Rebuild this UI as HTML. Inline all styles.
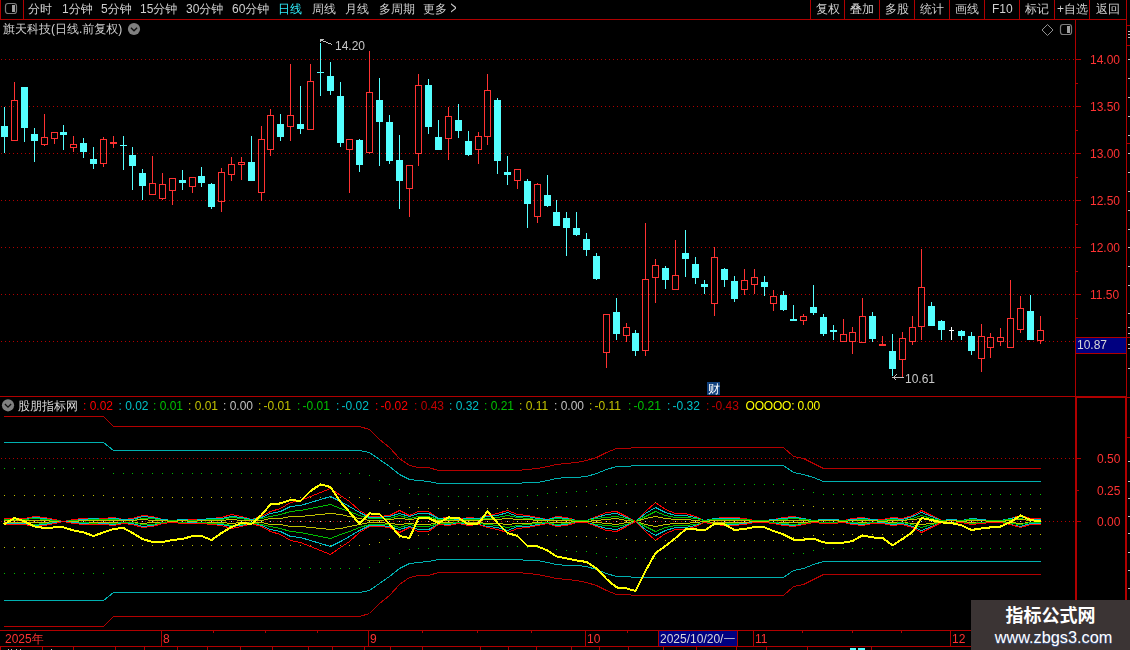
<!DOCTYPE html>
<html lang="zh-CN"><head><meta charset="utf-8"><title>旗天科技 日线</title>
<style>
html,body{margin:0;padding:0;background:#000;}
body{width:1130px;height:650px;position:relative;overflow:hidden;font-family:"Liberation Sans","WenQuanYi Zen Hei","Noto Sans CJK SC",sans-serif;}
.t{position:absolute;white-space:nowrap;line-height:14px;height:14px;}
.wm{position:absolute;left:971px;top:600px;width:159px;height:50px;background:#3b3434;color:#fff;text-align:center;}
.wm .a{position:absolute;left:0;right:0;top:4px;font-size:18px;line-height:24px;font-weight:bold;font-family:"Liberation Sans","Noto Sans CJK SC",sans-serif;}
.wm .b{position:absolute;left:6px;right:0;top:26.5px;font-size:16.3px;line-height:20px;font-family:"Liberation Sans","DejaVu Sans",sans-serif;text-shadow:0 1px 1px #4060a0;}
</style></head><body>
<svg width="1130" height="650" viewBox="0 0 1130 650" shape-rendering="crispEdges" style="position:absolute;left:0;top:0"><line x1="0" y1="59.5" x2="1075" y2="59.5" stroke="#b00000" stroke-width="1" stroke-dasharray="1 3" stroke-dashoffset="-1"/><rect x="1076" y="59" width="5" height="1" fill="#b00000"/><rect x="1076" y="83" width="2" height="1" fill="#b00000"/><line x1="0" y1="106.5" x2="1075" y2="106.5" stroke="#b00000" stroke-width="1" stroke-dasharray="1 3" stroke-dashoffset="-1"/><rect x="1076" y="106" width="5" height="1" fill="#b00000"/><rect x="1076" y="130" width="2" height="1" fill="#b00000"/><line x1="0" y1="153.5" x2="1075" y2="153.5" stroke="#b00000" stroke-width="1" stroke-dasharray="1 3" stroke-dashoffset="-1"/><rect x="1076" y="153" width="5" height="1" fill="#b00000"/><rect x="1076" y="177" width="2" height="1" fill="#b00000"/><line x1="0" y1="200.5" x2="1075" y2="200.5" stroke="#b00000" stroke-width="1" stroke-dasharray="1 3" stroke-dashoffset="-1"/><rect x="1076" y="200" width="5" height="1" fill="#b00000"/><rect x="1076" y="224" width="2" height="1" fill="#b00000"/><line x1="0" y1="247.5" x2="1075" y2="247.5" stroke="#b00000" stroke-width="1" stroke-dasharray="1 3" stroke-dashoffset="-1"/><rect x="1076" y="247" width="5" height="1" fill="#b00000"/><rect x="1076" y="271" width="2" height="1" fill="#b00000"/><line x1="0" y1="294.5" x2="1075" y2="294.5" stroke="#b00000" stroke-width="1" stroke-dasharray="1 3" stroke-dashoffset="-1"/><rect x="1076" y="294" width="5" height="1" fill="#b00000"/><rect x="1076" y="318" width="2" height="1" fill="#b00000"/><line x1="0" y1="341.5" x2="1075" y2="341.5" stroke="#b00000" stroke-width="1" stroke-dasharray="1 3" stroke-dashoffset="-1"/><rect x="1076" y="341" width="5" height="1" fill="#b00000"/><line x1="0" y1="458.5" x2="1075" y2="458.5" stroke="#b00000" stroke-width="1" stroke-dasharray="1 3" stroke-dashoffset="-1"/><rect x="1076" y="458" width="5" height="1" fill="#b00000"/><line x1="0" y1="521.5" x2="1075" y2="521.5" stroke="#b00000" stroke-width="1" stroke-dasharray="1 3" stroke-dashoffset="-1"/><rect x="1076" y="521" width="5" height="1" fill="#b00000"/><rect x="1077" y="490" width="2" height="1" fill="#b00000"/><rect x="0" y="19" width="1127" height="1" fill="#b00000"/><rect x="0" y="0" width="1" height="20" fill="#b00000"/><rect x="0" y="646" width="1" height="4" fill="#b00000"/><rect x="8" y="649" width="1" height="1" fill="#c0c0c0"/><rect x="11" y="649" width="1" height="1" fill="#c0c0c0"/><rect x="16" y="649" width="1" height="1" fill="#c0c0c0"/><rect x="20" y="649" width="1" height="1" fill="#c0c0c0"/><rect x="51" y="649" width="1" height="1" fill="#c0c0c0"/><rect x="850" y="648" width="6" height="2" fill="#54ffff"/><rect x="858" y="648" width="7" height="2" fill="#54ffff"/><rect x="23" y="0" width="1" height="20" fill="#b00000"/><rect x="810" y="0" width="1" height="20" fill="#b00000"/><rect x="844" y="0" width="1" height="20" fill="#b00000"/><rect x="879" y="0" width="1" height="20" fill="#b00000"/><rect x="914" y="0" width="1" height="20" fill="#b00000"/><rect x="949" y="0" width="1" height="20" fill="#b00000"/><rect x="984" y="0" width="1" height="20" fill="#b00000"/><rect x="1019" y="0" width="1" height="20" fill="#b00000"/><rect x="1054" y="0" width="1" height="20" fill="#b00000"/><rect x="1089" y="0" width="1" height="20" fill="#b00000"/><rect x="1126" y="0" width="1" height="650" fill="#b00000"/><rect x="1075" y="19" width="1" height="627" fill="#b00000"/><rect x="0" y="396" width="1127" height="1" fill="#b00000"/><rect x="1076" y="397" width="54" height="1" fill="#b00000"/><rect x="1076" y="397" width="1" height="250" fill="#b00000"/><rect x="1125" y="397" width="1" height="250" fill="#b00000"/><rect x="0" y="630" width="1076" height="1" fill="#b00000"/><rect x="0" y="646" width="1127" height="1" fill="#b00000"/><rect x="161" y="630" width="1" height="16" fill="#b00000"/><rect x="368" y="630" width="1" height="16" fill="#b00000"/><rect x="585" y="630" width="1" height="16" fill="#b00000"/><rect x="753" y="630" width="1" height="16" fill="#b00000"/><rect x="950" y="630" width="1" height="16" fill="#b00000"/><rect x="213" y="630" width="1" height="3" fill="#b00000"/><rect x="265" y="630" width="1" height="3" fill="#b00000"/><rect x="317" y="630" width="1" height="3" fill="#b00000"/><rect x="422" y="630" width="1" height="3" fill="#b00000"/><rect x="477" y="630" width="1" height="3" fill="#b00000"/><rect x="531" y="630" width="1" height="3" fill="#b00000"/><rect x="627" y="630" width="1" height="3" fill="#b00000"/><rect x="669" y="630" width="1" height="3" fill="#b00000"/><rect x="711" y="630" width="1" height="3" fill="#b00000"/><rect x="802" y="630" width="1" height="3" fill="#b00000"/><rect x="852" y="630" width="1" height="3" fill="#b00000"/><rect x="901" y="630" width="1" height="3" fill="#b00000"/><rect x="1000" y="630" width="1" height="3" fill="#b00000"/><rect x="1050" y="630" width="1" height="3" fill="#b00000"/><rect x="42" y="647" width="1" height="3" fill="#b00000"/><rect x="73" y="647" width="1" height="3" fill="#b00000"/><rect x="115" y="647" width="1" height="3" fill="#b00000"/><rect x="144" y="647" width="1" height="3" fill="#b00000"/><rect x="177" y="647" width="1" height="3" fill="#b00000"/><rect x="207" y="647" width="1" height="3" fill="#b00000"/><rect x="240" y="647" width="1" height="3" fill="#b00000"/><rect x="272" y="647" width="1" height="3" fill="#b00000"/><rect x="308" y="647" width="1" height="3" fill="#b00000"/><rect x="332" y="647" width="1" height="3" fill="#b00000"/><rect x="364" y="647" width="1" height="3" fill="#b00000"/><rect x="390" y="647" width="1" height="3" fill="#b00000"/><rect x="422" y="647" width="1" height="3" fill="#b00000"/><rect x="480" y="647" width="1" height="3" fill="#b00000"/><rect x="508" y="647" width="1" height="3" fill="#b00000"/><rect x="536" y="647" width="1" height="3" fill="#b00000"/><rect x="571" y="647" width="1" height="3" fill="#b00000"/><rect x="599" y="647" width="1" height="3" fill="#b00000"/><rect x="628" y="647" width="1" height="3" fill="#b00000"/><rect x="663" y="647" width="1" height="3" fill="#b00000"/><rect x="696" y="647" width="1" height="3" fill="#b00000"/><rect x="736" y="647" width="1" height="3" fill="#b00000"/><rect x="766" y="647" width="1" height="3" fill="#b00000"/><rect x="807" y="647" width="1" height="3" fill="#b00000"/><rect x="871" y="647" width="1" height="3" fill="#b00000"/><rect x="1127" y="25" width="3" height="1" fill="#b00000"/><rect x="1127" y="45" width="3" height="1" fill="#b00000"/><rect x="1127" y="337" width="3" height="1" fill="#b00000"/><rect x="1128" y="59" width="2" height="1" fill="#c0c0c0"/><rect x="1128" y="78" width="2" height="1" fill="#c0c0c0"/><rect x="1128" y="97" width="2" height="1" fill="#c0c0c0"/><rect x="1128" y="116" width="2" height="1" fill="#c0c0c0"/><rect x="1128" y="135" width="2" height="1" fill="#c0c0c0"/><rect x="1128" y="153" width="2" height="1" fill="#c0c0c0"/><rect x="1128" y="172" width="2" height="1" fill="#c0c0c0"/><rect x="1128" y="191" width="2" height="1" fill="#c0c0c0"/><rect x="1128" y="210" width="2" height="1" fill="#c0c0c0"/><rect x="1128" y="229" width="2" height="1" fill="#c0c0c0"/><rect x="1128" y="247" width="2" height="1" fill="#c0c0c0"/><rect x="1128" y="266" width="2" height="1" fill="#c0c0c0"/><rect x="1128" y="285" width="2" height="1" fill="#c0c0c0"/><rect x="1128" y="313" width="2" height="1" fill="#c0c0c0"/><rect x="1128" y="327" width="2" height="1" fill="#c0c0c0"/><rect x="1128" y="333" width="2" height="1" fill="#c0c0c0"/><rect x="1128" y="344" width="2" height="1" fill="#c0c0c0"/><rect x="1128" y="348" width="2" height="1" fill="#c0c0c0"/><rect x="1128" y="368" width="2" height="1" fill="#c0c0c0"/><rect x="1128" y="461" width="2" height="1" fill="#c0c0c0"/><rect x="1128" y="481" width="2" height="1" fill="#c0c0c0"/><rect x="1128" y="498" width="2" height="1" fill="#c0c0c0"/><rect x="1128" y="516" width="2" height="1" fill="#c0c0c0"/><rect x="1128" y="533" width="2" height="1" fill="#c0c0c0"/><rect x="1128" y="552" width="2" height="1" fill="#c0c0c0"/><rect x="1128" y="570" width="2" height="1" fill="#c0c0c0"/><rect x="1128" y="588" width="2" height="1" fill="#c0c0c0"/><rect x="1128" y="31" width="2" height="1" fill="#c0c0c0"/><rect x="1128" y="34" width="2" height="1" fill="#c0c0c0"/><rect x="1128" y="37" width="2" height="1" fill="#c0c0c0"/><rect x="1127" y="437" width="3" height="1" fill="#b00000"/><rect x="1127" y="143" width="3" height="1" fill="#b00000"/><polyline points="4.5,518.5 14.5,518.5 24.5,518.5 34.5,516.5 44.5,517.5 54.5,519.5 63.5,521.5 73.5,519.5 83.5,518.5 93.5,518.5 103.5,518.5 113.5,517.5 123.5,519.5 132.5,518.5 142.5,515.5 152.5,516.5 162.5,519.5 172.5,520.5 182.5,519.5 192.5,519.5 201.5,519.5 211.5,518.5 221.5,517.5 231.5,514.5 241.5,516.5 251.5,519.5 261.5,516.5 270.5,511.5 280.5,508.5 290.5,502.5 300.5,500.5 310.5,496.5 320.5,492.5 330.5,488.5 340.5,495.5 349.5,501.5 359.5,510.5 369.5,516.5 379.5,516.5 389.5,515.5 399.5,510.5 409.5,515.5 418.5,511.5 428.5,511.5 438.5,518.5 448.5,517.5 458.5,519.5 468.5,517.5 478.5,518.5 487.5,515.5 497.5,513.5 507.5,510.5 517.5,514.5 527.5,515.5 537.5,517.5 547.5,519.5 556.5,516.5 566.5,517.5 576.5,520.5 586.5,520.5 596.5,516.5 606.5,512.5 616.5,511.5 626.5,516.5 635.5,521.5 645.5,511.5 655.5,502.5 665.5,509.5 675.5,513.5 685.5,513.5 695.5,516.5 704.5,520.5 714.5,518.5 724.5,517.5 734.5,517.5 744.5,518.5 754.5,520.5 764.5,520.5 773.5,519.5 783.5,517.5 793.5,516.5 803.5,518.5 813.5,520.5 823.5,519.5 833.5,519.5 843.5,520.5 852.5,518.5 862.5,517.5 872.5,519.5 882.5,519.5 892.5,517.5 902.5,518.5 912.5,515.5 921.5,510.5 931.5,515.5 941.5,520.5 951.5,519.5 961.5,520.5 971.5,518.5 981.5,519.5 990.5,520.5 1000.5,520.5 1010.5,518.5 1020.5,515.5 1030.5,518.5 1040.5,518.5" fill="none" stroke="#ff0000" stroke-width="1" stroke-linecap="square" /><polyline points="4.5,519.5 14.5,519.5 24.5,519.5 34.5,517.5 44.5,518.5 54.5,520.5 63.5,521.5 73.5,520.5 83.5,519.5 93.5,518.5 103.5,519.5 113.5,518.5 123.5,519.5 132.5,519.5 142.5,516.5 152.5,517.5 162.5,519.5 172.5,520.5 182.5,519.5 192.5,520.5 201.5,519.5 211.5,518.5 221.5,518.5 231.5,516.5 241.5,517.5 251.5,519.5 261.5,517.5 270.5,513.5 280.5,511.5 290.5,506.5 300.5,505.5 310.5,502.5 320.5,499.5 330.5,496.5 340.5,501.5 349.5,506.5 359.5,512.5 369.5,517.5 379.5,517.5 389.5,516.5 399.5,513.5 409.5,516.5 418.5,513.5 428.5,513.5 438.5,518.5 448.5,518.5 458.5,519.5 468.5,518.5 478.5,518.5 487.5,516.5 497.5,515.5 507.5,512.5 517.5,516.5 527.5,516.5 537.5,518.5 547.5,519.5 556.5,517.5 566.5,518.5 576.5,520.5 586.5,520.5 596.5,517.5 606.5,514.5 616.5,513.5 626.5,517.5 635.5,521.5 645.5,513.5 655.5,507.5 665.5,512.5 675.5,515.5 685.5,515.5 695.5,517.5 704.5,520.5 714.5,518.5 724.5,518.5 734.5,518.5 744.5,519.5 754.5,520.5 764.5,520.5 773.5,519.5 783.5,518.5 793.5,517.5 803.5,518.5 813.5,520.5 823.5,519.5 833.5,519.5 843.5,520.5 852.5,519.5 862.5,518.5 872.5,519.5 882.5,520.5 892.5,518.5 902.5,519.5 912.5,516.5 921.5,512.5 931.5,516.5 941.5,520.5 951.5,519.5 961.5,520.5 971.5,518.5 981.5,519.5 990.5,520.5 1000.5,520.5 1010.5,518.5 1020.5,516.5 1030.5,519.5 1040.5,519.5" fill="none" stroke="#00c0c8" stroke-width="1" stroke-linecap="square" /><polyline points="4.5,519.5 14.5,519.5 24.5,519.5 34.5,518.5 44.5,519.5 54.5,520.5 63.5,521.5 73.5,520.5 83.5,520.5 93.5,519.5 103.5,519.5 113.5,519.5 123.5,520.5 132.5,520.5 142.5,518.5 152.5,518.5 162.5,520.5 172.5,520.5 182.5,520.5 192.5,520.5 201.5,520.5 211.5,519.5 221.5,519.5 231.5,517.5 241.5,518.5 251.5,520.5 261.5,518.5 270.5,516.5 280.5,514.5 290.5,511.5 300.5,510.5 310.5,508.5 320.5,506.5 330.5,504.5 340.5,508.5 349.5,511.5 359.5,515.5 369.5,518.5 379.5,518.5 389.5,518.5 399.5,515.5 409.5,518.5 418.5,516.5 428.5,516.5 438.5,519.5 448.5,519.5 458.5,520.5 468.5,519.5 478.5,519.5 487.5,518.5 497.5,517.5 507.5,515.5 517.5,517.5 527.5,518.5 537.5,519.5 547.5,520.5 556.5,518.5 566.5,519.5 576.5,520.5 586.5,520.5 596.5,518.5 606.5,517.5 616.5,516.5 626.5,518.5 635.5,521.5 645.5,516.5 655.5,511.5 665.5,515.5 675.5,517.5 685.5,517.5 695.5,518.5 704.5,520.5 714.5,519.5 724.5,519.5 734.5,519.5 744.5,519.5 754.5,520.5 764.5,520.5 773.5,520.5 783.5,519.5 793.5,518.5 803.5,519.5 813.5,520.5 823.5,520.5 833.5,520.5 843.5,520.5 852.5,520.5 862.5,519.5 872.5,520.5 882.5,520.5 892.5,519.5 902.5,520.5 912.5,518.5 921.5,515.5 931.5,518.5 941.5,520.5 951.5,520.5 961.5,520.5 971.5,519.5 981.5,520.5 990.5,520.5 1000.5,520.5 1010.5,519.5 1020.5,518.5 1030.5,520.5 1040.5,520.5" fill="none" stroke="#00c000" stroke-width="1" stroke-linecap="square" /><polyline points="4.5,520.5 14.5,520.5 24.5,520.5 34.5,520.5 44.5,520.5 54.5,521.5 63.5,521.5 73.5,521.5 83.5,520.5 93.5,520.5 103.5,520.5 113.5,520.5 123.5,520.5 132.5,520.5 142.5,519.5 152.5,520.5 162.5,520.5 172.5,521.5 182.5,520.5 192.5,521.5 201.5,520.5 211.5,520.5 221.5,520.5 231.5,519.5 241.5,520.5 251.5,520.5 261.5,520.5 270.5,518.5 280.5,518.5 290.5,516.5 300.5,516.5 310.5,515.5 320.5,514.5 330.5,513.5 340.5,514.5 349.5,516.5 359.5,518.5 369.5,520.5 379.5,520.5 389.5,519.5 399.5,518.5 409.5,519.5 418.5,518.5 428.5,518.5 438.5,520.5 448.5,520.5 458.5,520.5 468.5,520.5 478.5,520.5 487.5,519.5 497.5,519.5 507.5,518.5 517.5,519.5 527.5,519.5 537.5,520.5 547.5,520.5 556.5,520.5 566.5,520.5 576.5,521.5 586.5,521.5 596.5,520.5 606.5,519.5 616.5,518.5 626.5,520.5 635.5,521.5 645.5,518.5 655.5,516.5 665.5,518.5 675.5,519.5 685.5,519.5 695.5,520.5 704.5,521.5 714.5,520.5 724.5,520.5 734.5,520.5 744.5,520.5 754.5,521.5 764.5,521.5 773.5,520.5 783.5,520.5 793.5,520.5 803.5,520.5 813.5,521.5 823.5,520.5 833.5,520.5 843.5,521.5 852.5,520.5 862.5,520.5 872.5,520.5 882.5,521.5 892.5,520.5 902.5,520.5 912.5,519.5 921.5,518.5 931.5,519.5 941.5,521.5 951.5,520.5 961.5,521.5 971.5,520.5 981.5,520.5 990.5,521.5 1000.5,521.5 1010.5,520.5 1020.5,519.5 1030.5,520.5 1040.5,520.5" fill="none" stroke="#c0c000" stroke-width="1" stroke-linecap="square" /><rect x="4" y="521" width="1" height="1" fill="#d0d0d0"/><rect x="14" y="521" width="1" height="1" fill="#d0d0d0"/><rect x="24" y="521" width="1" height="1" fill="#d0d0d0"/><rect x="34" y="521" width="1" height="1" fill="#d0d0d0"/><rect x="44" y="521" width="1" height="1" fill="#d0d0d0"/><rect x="54" y="521" width="1" height="1" fill="#d0d0d0"/><rect x="63" y="521" width="1" height="1" fill="#d0d0d0"/><rect x="73" y="521" width="1" height="1" fill="#d0d0d0"/><rect x="83" y="521" width="1" height="1" fill="#d0d0d0"/><rect x="93" y="521" width="1" height="1" fill="#d0d0d0"/><rect x="103" y="521" width="1" height="1" fill="#d0d0d0"/><rect x="113" y="521" width="1" height="1" fill="#d0d0d0"/><rect x="123" y="521" width="1" height="1" fill="#d0d0d0"/><rect x="132" y="521" width="1" height="1" fill="#d0d0d0"/><rect x="142" y="521" width="1" height="1" fill="#d0d0d0"/><rect x="152" y="521" width="1" height="1" fill="#d0d0d0"/><rect x="162" y="521" width="1" height="1" fill="#d0d0d0"/><rect x="172" y="521" width="1" height="1" fill="#d0d0d0"/><rect x="182" y="521" width="1" height="1" fill="#d0d0d0"/><rect x="192" y="521" width="1" height="1" fill="#d0d0d0"/><rect x="201" y="521" width="1" height="1" fill="#d0d0d0"/><rect x="211" y="521" width="1" height="1" fill="#d0d0d0"/><rect x="221" y="521" width="1" height="1" fill="#d0d0d0"/><rect x="231" y="521" width="1" height="1" fill="#d0d0d0"/><rect x="241" y="521" width="1" height="1" fill="#d0d0d0"/><rect x="251" y="521" width="1" height="1" fill="#d0d0d0"/><rect x="261" y="521" width="1" height="1" fill="#d0d0d0"/><rect x="270" y="521" width="1" height="1" fill="#d0d0d0"/><rect x="280" y="521" width="1" height="1" fill="#d0d0d0"/><rect x="290" y="521" width="1" height="1" fill="#d0d0d0"/><rect x="300" y="521" width="1" height="1" fill="#d0d0d0"/><rect x="310" y="521" width="1" height="1" fill="#d0d0d0"/><rect x="320" y="521" width="1" height="1" fill="#d0d0d0"/><rect x="330" y="521" width="1" height="1" fill="#d0d0d0"/><rect x="340" y="521" width="1" height="1" fill="#d0d0d0"/><rect x="349" y="521" width="1" height="1" fill="#d0d0d0"/><rect x="359" y="521" width="1" height="1" fill="#d0d0d0"/><rect x="369" y="521" width="1" height="1" fill="#d0d0d0"/><rect x="379" y="521" width="1" height="1" fill="#d0d0d0"/><rect x="389" y="521" width="1" height="1" fill="#d0d0d0"/><rect x="399" y="521" width="1" height="1" fill="#d0d0d0"/><rect x="409" y="521" width="1" height="1" fill="#d0d0d0"/><rect x="418" y="521" width="1" height="1" fill="#d0d0d0"/><rect x="428" y="521" width="1" height="1" fill="#d0d0d0"/><rect x="438" y="521" width="1" height="1" fill="#d0d0d0"/><rect x="448" y="521" width="1" height="1" fill="#d0d0d0"/><rect x="458" y="521" width="1" height="1" fill="#d0d0d0"/><rect x="468" y="521" width="1" height="1" fill="#d0d0d0"/><rect x="478" y="521" width="1" height="1" fill="#d0d0d0"/><rect x="487" y="521" width="1" height="1" fill="#d0d0d0"/><rect x="497" y="521" width="1" height="1" fill="#d0d0d0"/><rect x="507" y="521" width="1" height="1" fill="#d0d0d0"/><rect x="517" y="521" width="1" height="1" fill="#d0d0d0"/><rect x="527" y="521" width="1" height="1" fill="#d0d0d0"/><rect x="537" y="521" width="1" height="1" fill="#d0d0d0"/><rect x="547" y="521" width="1" height="1" fill="#d0d0d0"/><rect x="556" y="521" width="1" height="1" fill="#d0d0d0"/><rect x="566" y="521" width="1" height="1" fill="#d0d0d0"/><rect x="576" y="521" width="1" height="1" fill="#d0d0d0"/><rect x="586" y="521" width="1" height="1" fill="#d0d0d0"/><rect x="596" y="521" width="1" height="1" fill="#d0d0d0"/><rect x="606" y="521" width="1" height="1" fill="#d0d0d0"/><rect x="616" y="521" width="1" height="1" fill="#d0d0d0"/><rect x="626" y="521" width="1" height="1" fill="#d0d0d0"/><rect x="635" y="521" width="1" height="1" fill="#d0d0d0"/><rect x="645" y="521" width="1" height="1" fill="#d0d0d0"/><rect x="655" y="521" width="1" height="1" fill="#d0d0d0"/><rect x="665" y="521" width="1" height="1" fill="#d0d0d0"/><rect x="675" y="521" width="1" height="1" fill="#d0d0d0"/><rect x="685" y="521" width="1" height="1" fill="#d0d0d0"/><rect x="695" y="521" width="1" height="1" fill="#d0d0d0"/><rect x="704" y="521" width="1" height="1" fill="#d0d0d0"/><rect x="714" y="521" width="1" height="1" fill="#d0d0d0"/><rect x="724" y="521" width="1" height="1" fill="#d0d0d0"/><rect x="734" y="521" width="1" height="1" fill="#d0d0d0"/><rect x="744" y="521" width="1" height="1" fill="#d0d0d0"/><rect x="754" y="521" width="1" height="1" fill="#d0d0d0"/><rect x="764" y="521" width="1" height="1" fill="#d0d0d0"/><rect x="773" y="521" width="1" height="1" fill="#d0d0d0"/><rect x="783" y="521" width="1" height="1" fill="#d0d0d0"/><rect x="793" y="521" width="1" height="1" fill="#d0d0d0"/><rect x="803" y="521" width="1" height="1" fill="#d0d0d0"/><rect x="813" y="521" width="1" height="1" fill="#d0d0d0"/><rect x="823" y="521" width="1" height="1" fill="#d0d0d0"/><rect x="833" y="521" width="1" height="1" fill="#d0d0d0"/><rect x="843" y="521" width="1" height="1" fill="#d0d0d0"/><rect x="852" y="521" width="1" height="1" fill="#d0d0d0"/><rect x="862" y="521" width="1" height="1" fill="#d0d0d0"/><rect x="872" y="521" width="1" height="1" fill="#d0d0d0"/><rect x="882" y="521" width="1" height="1" fill="#d0d0d0"/><rect x="892" y="521" width="1" height="1" fill="#d0d0d0"/><rect x="902" y="521" width="1" height="1" fill="#d0d0d0"/><rect x="912" y="521" width="1" height="1" fill="#d0d0d0"/><rect x="921" y="521" width="1" height="1" fill="#d0d0d0"/><rect x="931" y="521" width="1" height="1" fill="#d0d0d0"/><rect x="941" y="521" width="1" height="1" fill="#d0d0d0"/><rect x="951" y="521" width="1" height="1" fill="#d0d0d0"/><rect x="961" y="521" width="1" height="1" fill="#d0d0d0"/><rect x="971" y="521" width="1" height="1" fill="#d0d0d0"/><rect x="981" y="521" width="1" height="1" fill="#d0d0d0"/><rect x="990" y="521" width="1" height="1" fill="#d0d0d0"/><rect x="1000" y="521" width="1" height="1" fill="#d0d0d0"/><rect x="1010" y="521" width="1" height="1" fill="#d0d0d0"/><rect x="1020" y="521" width="1" height="1" fill="#d0d0d0"/><rect x="1030" y="521" width="1" height="1" fill="#d0d0d0"/><rect x="1040" y="521" width="1" height="1" fill="#d0d0d0"/><polyline points="4.5,522.5 14.5,522.5 24.5,522.5 34.5,522.5 44.5,522.5 54.5,521.5 63.5,521.5 73.5,521.5 83.5,522.5 93.5,522.5 103.5,522.5 113.5,522.5 123.5,522.5 132.5,522.5 142.5,523.5 152.5,522.5 162.5,522.5 172.5,521.5 182.5,522.5 192.5,521.5 201.5,522.5 211.5,522.5 221.5,522.5 231.5,523.5 241.5,522.5 251.5,522.5 261.5,522.5 270.5,524.5 280.5,524.5 290.5,526.5 300.5,526.5 310.5,527.5 320.5,528.5 330.5,529.5 340.5,528.5 349.5,526.5 359.5,524.5 369.5,522.5 379.5,522.5 389.5,523.5 399.5,524.5 409.5,523.5 418.5,524.5 428.5,524.5 438.5,522.5 448.5,522.5 458.5,522.5 468.5,522.5 478.5,522.5 487.5,523.5 497.5,523.5 507.5,524.5 517.5,523.5 527.5,523.5 537.5,522.5 547.5,522.5 556.5,522.5 566.5,522.5 576.5,521.5 586.5,521.5 596.5,522.5 606.5,523.5 616.5,524.5 626.5,522.5 635.5,521.5 645.5,524.5 655.5,526.5 665.5,524.5 675.5,523.5 685.5,523.5 695.5,522.5 704.5,521.5 714.5,522.5 724.5,522.5 734.5,522.5 744.5,522.5 754.5,521.5 764.5,521.5 773.5,522.5 783.5,522.5 793.5,522.5 803.5,522.5 813.5,521.5 823.5,522.5 833.5,522.5 843.5,521.5 852.5,522.5 862.5,522.5 872.5,522.5 882.5,521.5 892.5,522.5 902.5,522.5 912.5,523.5 921.5,524.5 931.5,523.5 941.5,521.5 951.5,522.5 961.5,521.5 971.5,522.5 981.5,522.5 990.5,521.5 1000.5,521.5 1010.5,522.5 1020.5,523.5 1030.5,522.5 1040.5,522.5" fill="none" stroke="#c0c000" stroke-width="1" stroke-linecap="square" /><polyline points="4.5,523.5 14.5,523.5 24.5,523.5 34.5,524.5 44.5,523.5 54.5,522.5 63.5,521.5 73.5,522.5 83.5,522.5 93.5,523.5 103.5,523.5 113.5,523.5 123.5,522.5 132.5,522.5 142.5,524.5 152.5,524.5 162.5,522.5 172.5,522.5 182.5,522.5 192.5,522.5 201.5,522.5 211.5,523.5 221.5,523.5 231.5,525.5 241.5,524.5 251.5,522.5 261.5,524.5 270.5,526.5 280.5,528.5 290.5,531.5 300.5,532.5 310.5,534.5 320.5,536.5 330.5,538.5 340.5,534.5 349.5,531.5 359.5,527.5 369.5,524.5 379.5,524.5 389.5,524.5 399.5,527.5 409.5,524.5 418.5,526.5 428.5,526.5 438.5,523.5 448.5,523.5 458.5,522.5 468.5,523.5 478.5,523.5 487.5,524.5 497.5,525.5 507.5,527.5 517.5,525.5 527.5,524.5 537.5,523.5 547.5,522.5 556.5,524.5 566.5,523.5 576.5,522.5 586.5,522.5 596.5,524.5 606.5,525.5 616.5,526.5 626.5,524.5 635.5,521.5 645.5,526.5 655.5,531.5 665.5,527.5 675.5,525.5 685.5,525.5 695.5,524.5 704.5,522.5 714.5,523.5 724.5,523.5 734.5,523.5 744.5,523.5 754.5,522.5 764.5,522.5 773.5,522.5 783.5,523.5 793.5,524.5 803.5,523.5 813.5,522.5 823.5,522.5 833.5,522.5 843.5,522.5 852.5,522.5 862.5,523.5 872.5,522.5 882.5,522.5 892.5,523.5 902.5,522.5 912.5,524.5 921.5,527.5 931.5,524.5 941.5,522.5 951.5,522.5 961.5,522.5 971.5,523.5 981.5,522.5 990.5,522.5 1000.5,522.5 1010.5,523.5 1020.5,524.5 1030.5,522.5 1040.5,522.5" fill="none" stroke="#00c000" stroke-width="1" stroke-linecap="square" /><polyline points="4.5,523.5 14.5,523.5 24.5,523.5 34.5,525.5 44.5,524.5 54.5,522.5 63.5,521.5 73.5,522.5 83.5,523.5 93.5,524.5 103.5,523.5 113.5,524.5 123.5,523.5 132.5,523.5 142.5,526.5 152.5,525.5 162.5,523.5 172.5,522.5 182.5,523.5 192.5,522.5 201.5,523.5 211.5,524.5 221.5,524.5 231.5,526.5 241.5,525.5 251.5,523.5 261.5,525.5 270.5,529.5 280.5,531.5 290.5,536.5 300.5,537.5 310.5,540.5 320.5,543.5 330.5,546.5 340.5,541.5 349.5,536.5 359.5,530.5 369.5,525.5 379.5,525.5 389.5,526.5 399.5,529.5 409.5,526.5 418.5,529.5 428.5,529.5 438.5,524.5 448.5,524.5 458.5,523.5 468.5,524.5 478.5,524.5 487.5,526.5 497.5,527.5 507.5,530.5 517.5,526.5 527.5,526.5 537.5,524.5 547.5,523.5 556.5,525.5 566.5,524.5 576.5,522.5 586.5,522.5 596.5,525.5 606.5,528.5 616.5,529.5 626.5,525.5 635.5,521.5 645.5,529.5 655.5,535.5 665.5,530.5 675.5,527.5 685.5,527.5 695.5,525.5 704.5,522.5 714.5,524.5 724.5,524.5 734.5,524.5 744.5,523.5 754.5,522.5 764.5,522.5 773.5,523.5 783.5,524.5 793.5,525.5 803.5,524.5 813.5,522.5 823.5,523.5 833.5,523.5 843.5,522.5 852.5,523.5 862.5,524.5 872.5,523.5 882.5,522.5 892.5,524.5 902.5,523.5 912.5,526.5 921.5,530.5 931.5,526.5 941.5,522.5 951.5,523.5 961.5,522.5 971.5,524.5 981.5,523.5 990.5,522.5 1000.5,522.5 1010.5,524.5 1020.5,526.5 1030.5,523.5 1040.5,523.5" fill="none" stroke="#00c0c8" stroke-width="1" stroke-linecap="square" /><polyline points="4.5,524.5 14.5,524.5 24.5,524.5 34.5,526.5 44.5,525.5 54.5,523.5 63.5,521.5 73.5,523.5 83.5,524.5 93.5,524.5 103.5,524.5 113.5,525.5 123.5,523.5 132.5,524.5 142.5,527.5 152.5,526.5 162.5,523.5 172.5,522.5 182.5,523.5 192.5,523.5 201.5,523.5 211.5,524.5 221.5,525.5 231.5,528.5 241.5,526.5 251.5,523.5 261.5,526.5 270.5,531.5 280.5,534.5 290.5,540.5 300.5,542.5 310.5,546.5 320.5,550.5 330.5,554.5 340.5,547.5 349.5,541.5 359.5,532.5 369.5,526.5 379.5,526.5 389.5,527.5 399.5,532.5 409.5,527.5 418.5,531.5 428.5,531.5 438.5,524.5 448.5,525.5 458.5,523.5 468.5,525.5 478.5,524.5 487.5,527.5 497.5,529.5 507.5,532.5 517.5,528.5 527.5,527.5 537.5,525.5 547.5,523.5 556.5,526.5 566.5,525.5 576.5,522.5 586.5,522.5 596.5,526.5 606.5,530.5 616.5,531.5 626.5,526.5 635.5,521.5 645.5,531.5 655.5,540.5 665.5,533.5 675.5,529.5 685.5,529.5 695.5,526.5 704.5,522.5 714.5,524.5 724.5,525.5 734.5,525.5 744.5,524.5 754.5,522.5 764.5,522.5 773.5,523.5 783.5,525.5 793.5,526.5 803.5,524.5 813.5,522.5 823.5,523.5 833.5,523.5 843.5,522.5 852.5,524.5 862.5,525.5 872.5,523.5 882.5,523.5 892.5,525.5 902.5,524.5 912.5,527.5 921.5,532.5 931.5,527.5 941.5,522.5 951.5,523.5 961.5,522.5 971.5,524.5 981.5,523.5 990.5,522.5 1000.5,522.5 1010.5,524.5 1020.5,527.5 1030.5,524.5 1040.5,524.5" fill="none" stroke="#ff0000" stroke-width="1" stroke-linecap="square" /><rect x="4" y="468" width="1" height="1" fill="#00c000"/><rect x="4" y="573" width="1" height="1" fill="#00c000"/><rect x="4" y="495" width="1" height="1" fill="#c0c000"/><rect x="4" y="547" width="1" height="1" fill="#c0c000"/><rect x="14" y="468" width="1" height="1" fill="#00c000"/><rect x="14" y="573" width="1" height="1" fill="#00c000"/><rect x="14" y="495" width="1" height="1" fill="#c0c000"/><rect x="14" y="547" width="1" height="1" fill="#c0c000"/><rect x="24" y="468" width="1" height="1" fill="#00c000"/><rect x="24" y="573" width="1" height="1" fill="#00c000"/><rect x="24" y="495" width="1" height="1" fill="#c0c000"/><rect x="24" y="547" width="1" height="1" fill="#c0c000"/><rect x="34" y="468" width="1" height="1" fill="#00c000"/><rect x="34" y="573" width="1" height="1" fill="#00c000"/><rect x="34" y="495" width="1" height="1" fill="#c0c000"/><rect x="34" y="547" width="1" height="1" fill="#c0c000"/><rect x="44" y="468" width="1" height="1" fill="#00c000"/><rect x="44" y="573" width="1" height="1" fill="#00c000"/><rect x="44" y="495" width="1" height="1" fill="#c0c000"/><rect x="44" y="547" width="1" height="1" fill="#c0c000"/><rect x="54" y="468" width="1" height="1" fill="#00c000"/><rect x="54" y="573" width="1" height="1" fill="#00c000"/><rect x="54" y="495" width="1" height="1" fill="#c0c000"/><rect x="54" y="547" width="1" height="1" fill="#c0c000"/><rect x="63" y="468" width="1" height="1" fill="#00c000"/><rect x="63" y="573" width="1" height="1" fill="#00c000"/><rect x="63" y="495" width="1" height="1" fill="#c0c000"/><rect x="63" y="547" width="1" height="1" fill="#c0c000"/><rect x="73" y="468" width="1" height="1" fill="#00c000"/><rect x="73" y="573" width="1" height="1" fill="#00c000"/><rect x="73" y="495" width="1" height="1" fill="#c0c000"/><rect x="73" y="547" width="1" height="1" fill="#c0c000"/><rect x="83" y="468" width="1" height="1" fill="#00c000"/><rect x="83" y="573" width="1" height="1" fill="#00c000"/><rect x="83" y="495" width="1" height="1" fill="#c0c000"/><rect x="83" y="547" width="1" height="1" fill="#c0c000"/><rect x="93" y="468" width="1" height="1" fill="#00c000"/><rect x="93" y="573" width="1" height="1" fill="#00c000"/><rect x="93" y="495" width="1" height="1" fill="#c0c000"/><rect x="93" y="547" width="1" height="1" fill="#c0c000"/><rect x="103" y="468" width="1" height="1" fill="#00c000"/><rect x="103" y="573" width="1" height="1" fill="#00c000"/><rect x="103" y="495" width="1" height="1" fill="#c0c000"/><rect x="103" y="547" width="1" height="1" fill="#c0c000"/><rect x="113" y="473" width="1" height="1" fill="#00c000"/><rect x="113" y="568" width="1" height="1" fill="#00c000"/><rect x="113" y="497" width="1" height="1" fill="#c0c000"/><rect x="113" y="545" width="1" height="1" fill="#c0c000"/><rect x="123" y="473" width="1" height="1" fill="#00c000"/><rect x="123" y="568" width="1" height="1" fill="#00c000"/><rect x="123" y="497" width="1" height="1" fill="#c0c000"/><rect x="123" y="545" width="1" height="1" fill="#c0c000"/><rect x="132" y="473" width="1" height="1" fill="#00c000"/><rect x="132" y="568" width="1" height="1" fill="#00c000"/><rect x="132" y="497" width="1" height="1" fill="#c0c000"/><rect x="132" y="545" width="1" height="1" fill="#c0c000"/><rect x="142" y="473" width="1" height="1" fill="#00c000"/><rect x="142" y="568" width="1" height="1" fill="#00c000"/><rect x="142" y="497" width="1" height="1" fill="#c0c000"/><rect x="142" y="545" width="1" height="1" fill="#c0c000"/><rect x="152" y="473" width="1" height="1" fill="#00c000"/><rect x="152" y="568" width="1" height="1" fill="#00c000"/><rect x="152" y="497" width="1" height="1" fill="#c0c000"/><rect x="152" y="545" width="1" height="1" fill="#c0c000"/><rect x="162" y="473" width="1" height="1" fill="#00c000"/><rect x="162" y="568" width="1" height="1" fill="#00c000"/><rect x="162" y="497" width="1" height="1" fill="#c0c000"/><rect x="162" y="545" width="1" height="1" fill="#c0c000"/><rect x="172" y="473" width="1" height="1" fill="#00c000"/><rect x="172" y="568" width="1" height="1" fill="#00c000"/><rect x="172" y="497" width="1" height="1" fill="#c0c000"/><rect x="172" y="545" width="1" height="1" fill="#c0c000"/><rect x="182" y="473" width="1" height="1" fill="#00c000"/><rect x="182" y="568" width="1" height="1" fill="#00c000"/><rect x="182" y="497" width="1" height="1" fill="#c0c000"/><rect x="182" y="545" width="1" height="1" fill="#c0c000"/><rect x="192" y="473" width="1" height="1" fill="#00c000"/><rect x="192" y="568" width="1" height="1" fill="#00c000"/><rect x="192" y="497" width="1" height="1" fill="#c0c000"/><rect x="192" y="545" width="1" height="1" fill="#c0c000"/><rect x="201" y="473" width="1" height="1" fill="#00c000"/><rect x="201" y="568" width="1" height="1" fill="#00c000"/><rect x="201" y="497" width="1" height="1" fill="#c0c000"/><rect x="201" y="545" width="1" height="1" fill="#c0c000"/><rect x="211" y="473" width="1" height="1" fill="#00c000"/><rect x="211" y="568" width="1" height="1" fill="#00c000"/><rect x="211" y="497" width="1" height="1" fill="#c0c000"/><rect x="211" y="545" width="1" height="1" fill="#c0c000"/><rect x="221" y="473" width="1" height="1" fill="#00c000"/><rect x="221" y="568" width="1" height="1" fill="#00c000"/><rect x="221" y="497" width="1" height="1" fill="#c0c000"/><rect x="221" y="545" width="1" height="1" fill="#c0c000"/><rect x="231" y="473" width="1" height="1" fill="#00c000"/><rect x="231" y="568" width="1" height="1" fill="#00c000"/><rect x="231" y="497" width="1" height="1" fill="#c0c000"/><rect x="231" y="545" width="1" height="1" fill="#c0c000"/><rect x="241" y="473" width="1" height="1" fill="#00c000"/><rect x="241" y="568" width="1" height="1" fill="#00c000"/><rect x="241" y="497" width="1" height="1" fill="#c0c000"/><rect x="241" y="545" width="1" height="1" fill="#c0c000"/><rect x="251" y="473" width="1" height="1" fill="#00c000"/><rect x="251" y="568" width="1" height="1" fill="#00c000"/><rect x="251" y="497" width="1" height="1" fill="#c0c000"/><rect x="251" y="545" width="1" height="1" fill="#c0c000"/><rect x="261" y="473" width="1" height="1" fill="#00c000"/><rect x="261" y="568" width="1" height="1" fill="#00c000"/><rect x="261" y="497" width="1" height="1" fill="#c0c000"/><rect x="261" y="545" width="1" height="1" fill="#c0c000"/><rect x="270" y="473" width="1" height="1" fill="#00c000"/><rect x="270" y="568" width="1" height="1" fill="#00c000"/><rect x="270" y="497" width="1" height="1" fill="#c0c000"/><rect x="270" y="545" width="1" height="1" fill="#c0c000"/><rect x="280" y="473" width="1" height="1" fill="#00c000"/><rect x="280" y="568" width="1" height="1" fill="#00c000"/><rect x="280" y="497" width="1" height="1" fill="#c0c000"/><rect x="280" y="545" width="1" height="1" fill="#c0c000"/><rect x="290" y="473" width="1" height="1" fill="#00c000"/><rect x="290" y="568" width="1" height="1" fill="#00c000"/><rect x="290" y="497" width="1" height="1" fill="#c0c000"/><rect x="290" y="545" width="1" height="1" fill="#c0c000"/><rect x="300" y="473" width="1" height="1" fill="#00c000"/><rect x="300" y="568" width="1" height="1" fill="#00c000"/><rect x="300" y="497" width="1" height="1" fill="#c0c000"/><rect x="300" y="545" width="1" height="1" fill="#c0c000"/><rect x="310" y="473" width="1" height="1" fill="#00c000"/><rect x="310" y="568" width="1" height="1" fill="#00c000"/><rect x="310" y="497" width="1" height="1" fill="#c0c000"/><rect x="310" y="545" width="1" height="1" fill="#c0c000"/><rect x="320" y="473" width="1" height="1" fill="#00c000"/><rect x="320" y="568" width="1" height="1" fill="#00c000"/><rect x="320" y="497" width="1" height="1" fill="#c0c000"/><rect x="320" y="545" width="1" height="1" fill="#c0c000"/><rect x="330" y="473" width="1" height="1" fill="#00c000"/><rect x="330" y="568" width="1" height="1" fill="#00c000"/><rect x="330" y="497" width="1" height="1" fill="#c0c000"/><rect x="330" y="545" width="1" height="1" fill="#c0c000"/><rect x="340" y="473" width="1" height="1" fill="#00c000"/><rect x="340" y="568" width="1" height="1" fill="#00c000"/><rect x="340" y="497" width="1" height="1" fill="#c0c000"/><rect x="340" y="545" width="1" height="1" fill="#c0c000"/><rect x="349" y="473" width="1" height="1" fill="#00c000"/><rect x="349" y="568" width="1" height="1" fill="#00c000"/><rect x="349" y="497" width="1" height="1" fill="#c0c000"/><rect x="349" y="545" width="1" height="1" fill="#c0c000"/><rect x="359" y="473" width="1" height="1" fill="#00c000"/><rect x="359" y="568" width="1" height="1" fill="#00c000"/><rect x="359" y="497" width="1" height="1" fill="#c0c000"/><rect x="359" y="545" width="1" height="1" fill="#c0c000"/><rect x="369" y="475" width="1" height="1" fill="#00c000"/><rect x="369" y="567" width="1" height="1" fill="#00c000"/><rect x="369" y="498" width="1" height="1" fill="#c0c000"/><rect x="369" y="544" width="1" height="1" fill="#c0c000"/><rect x="379" y="480" width="1" height="1" fill="#00c000"/><rect x="379" y="562" width="1" height="1" fill="#00c000"/><rect x="379" y="500" width="1" height="1" fill="#c0c000"/><rect x="379" y="542" width="1" height="1" fill="#c0c000"/><rect x="389" y="484" width="1" height="1" fill="#00c000"/><rect x="389" y="558" width="1" height="1" fill="#00c000"/><rect x="389" y="503" width="1" height="1" fill="#c0c000"/><rect x="389" y="539" width="1" height="1" fill="#c0c000"/><rect x="399" y="489" width="1" height="1" fill="#00c000"/><rect x="399" y="553" width="1" height="1" fill="#00c000"/><rect x="399" y="505" width="1" height="1" fill="#c0c000"/><rect x="399" y="537" width="1" height="1" fill="#c0c000"/><rect x="409" y="493" width="1" height="1" fill="#00c000"/><rect x="409" y="549" width="1" height="1" fill="#00c000"/><rect x="409" y="507" width="1" height="1" fill="#c0c000"/><rect x="409" y="535" width="1" height="1" fill="#c0c000"/><rect x="418" y="494" width="1" height="1" fill="#00c000"/><rect x="418" y="548" width="1" height="1" fill="#00c000"/><rect x="418" y="507" width="1" height="1" fill="#c0c000"/><rect x="418" y="535" width="1" height="1" fill="#c0c000"/><rect x="428" y="494" width="1" height="1" fill="#00c000"/><rect x="428" y="548" width="1" height="1" fill="#00c000"/><rect x="428" y="508" width="1" height="1" fill="#c0c000"/><rect x="428" y="534" width="1" height="1" fill="#c0c000"/><rect x="438" y="496" width="1" height="1" fill="#00c000"/><rect x="438" y="546" width="1" height="1" fill="#00c000"/><rect x="438" y="508" width="1" height="1" fill="#c0c000"/><rect x="438" y="534" width="1" height="1" fill="#c0c000"/><rect x="448" y="496" width="1" height="1" fill="#00c000"/><rect x="448" y="546" width="1" height="1" fill="#00c000"/><rect x="448" y="508" width="1" height="1" fill="#c0c000"/><rect x="448" y="534" width="1" height="1" fill="#c0c000"/><rect x="458" y="496" width="1" height="1" fill="#00c000"/><rect x="458" y="546" width="1" height="1" fill="#00c000"/><rect x="458" y="508" width="1" height="1" fill="#c0c000"/><rect x="458" y="534" width="1" height="1" fill="#c0c000"/><rect x="468" y="496" width="1" height="1" fill="#00c000"/><rect x="468" y="546" width="1" height="1" fill="#00c000"/><rect x="468" y="508" width="1" height="1" fill="#c0c000"/><rect x="468" y="534" width="1" height="1" fill="#c0c000"/><rect x="478" y="496" width="1" height="1" fill="#00c000"/><rect x="478" y="546" width="1" height="1" fill="#00c000"/><rect x="478" y="508" width="1" height="1" fill="#c0c000"/><rect x="478" y="534" width="1" height="1" fill="#c0c000"/><rect x="487" y="496" width="1" height="1" fill="#00c000"/><rect x="487" y="546" width="1" height="1" fill="#00c000"/><rect x="487" y="508" width="1" height="1" fill="#c0c000"/><rect x="487" y="534" width="1" height="1" fill="#c0c000"/><rect x="497" y="496" width="1" height="1" fill="#00c000"/><rect x="497" y="546" width="1" height="1" fill="#00c000"/><rect x="497" y="508" width="1" height="1" fill="#c0c000"/><rect x="497" y="534" width="1" height="1" fill="#c0c000"/><rect x="507" y="496" width="1" height="1" fill="#00c000"/><rect x="507" y="546" width="1" height="1" fill="#00c000"/><rect x="507" y="508" width="1" height="1" fill="#c0c000"/><rect x="507" y="534" width="1" height="1" fill="#c0c000"/><rect x="517" y="496" width="1" height="1" fill="#00c000"/><rect x="517" y="546" width="1" height="1" fill="#00c000"/><rect x="517" y="508" width="1" height="1" fill="#c0c000"/><rect x="517" y="534" width="1" height="1" fill="#c0c000"/><rect x="527" y="495" width="1" height="1" fill="#00c000"/><rect x="527" y="547" width="1" height="1" fill="#00c000"/><rect x="527" y="508" width="1" height="1" fill="#c0c000"/><rect x="527" y="534" width="1" height="1" fill="#c0c000"/><rect x="537" y="495" width="1" height="1" fill="#00c000"/><rect x="537" y="547" width="1" height="1" fill="#00c000"/><rect x="537" y="508" width="1" height="1" fill="#c0c000"/><rect x="537" y="534" width="1" height="1" fill="#c0c000"/><rect x="547" y="493" width="1" height="1" fill="#00c000"/><rect x="547" y="549" width="1" height="1" fill="#00c000"/><rect x="547" y="507" width="1" height="1" fill="#c0c000"/><rect x="547" y="535" width="1" height="1" fill="#c0c000"/><rect x="556" y="492" width="1" height="1" fill="#00c000"/><rect x="556" y="549" width="1" height="1" fill="#00c000"/><rect x="556" y="507" width="1" height="1" fill="#c0c000"/><rect x="556" y="535" width="1" height="1" fill="#c0c000"/><rect x="566" y="492" width="1" height="1" fill="#00c000"/><rect x="566" y="550" width="1" height="1" fill="#00c000"/><rect x="566" y="506" width="1" height="1" fill="#c0c000"/><rect x="566" y="536" width="1" height="1" fill="#c0c000"/><rect x="576" y="491" width="1" height="1" fill="#00c000"/><rect x="576" y="551" width="1" height="1" fill="#00c000"/><rect x="576" y="506" width="1" height="1" fill="#c0c000"/><rect x="576" y="536" width="1" height="1" fill="#c0c000"/><rect x="586" y="491" width="1" height="1" fill="#00c000"/><rect x="586" y="551" width="1" height="1" fill="#00c000"/><rect x="586" y="506" width="1" height="1" fill="#c0c000"/><rect x="586" y="536" width="1" height="1" fill="#c0c000"/><rect x="596" y="489" width="1" height="1" fill="#00c000"/><rect x="596" y="553" width="1" height="1" fill="#00c000"/><rect x="596" y="505" width="1" height="1" fill="#c0c000"/><rect x="596" y="537" width="1" height="1" fill="#c0c000"/><rect x="606" y="486" width="1" height="1" fill="#00c000"/><rect x="606" y="556" width="1" height="1" fill="#00c000"/><rect x="606" y="504" width="1" height="1" fill="#c0c000"/><rect x="606" y="538" width="1" height="1" fill="#c0c000"/><rect x="616" y="484" width="1" height="1" fill="#00c000"/><rect x="616" y="557" width="1" height="1" fill="#00c000"/><rect x="616" y="503" width="1" height="1" fill="#c0c000"/><rect x="616" y="539" width="1" height="1" fill="#c0c000"/><rect x="626" y="484" width="1" height="1" fill="#00c000"/><rect x="626" y="558" width="1" height="1" fill="#00c000"/><rect x="626" y="503" width="1" height="1" fill="#c0c000"/><rect x="626" y="539" width="1" height="1" fill="#c0c000"/><rect x="635" y="484" width="1" height="1" fill="#00c000"/><rect x="635" y="558" width="1" height="1" fill="#00c000"/><rect x="635" y="502" width="1" height="1" fill="#c0c000"/><rect x="635" y="540" width="1" height="1" fill="#c0c000"/><rect x="645" y="484" width="1" height="1" fill="#00c000"/><rect x="645" y="558" width="1" height="1" fill="#00c000"/><rect x="645" y="502" width="1" height="1" fill="#c0c000"/><rect x="645" y="540" width="1" height="1" fill="#c0c000"/><rect x="655" y="484" width="1" height="1" fill="#00c000"/><rect x="655" y="558" width="1" height="1" fill="#00c000"/><rect x="655" y="502" width="1" height="1" fill="#c0c000"/><rect x="655" y="540" width="1" height="1" fill="#c0c000"/><rect x="665" y="484" width="1" height="1" fill="#00c000"/><rect x="665" y="558" width="1" height="1" fill="#00c000"/><rect x="665" y="502" width="1" height="1" fill="#c0c000"/><rect x="665" y="540" width="1" height="1" fill="#c0c000"/><rect x="675" y="484" width="1" height="1" fill="#00c000"/><rect x="675" y="558" width="1" height="1" fill="#00c000"/><rect x="675" y="502" width="1" height="1" fill="#c0c000"/><rect x="675" y="540" width="1" height="1" fill="#c0c000"/><rect x="685" y="484" width="1" height="1" fill="#00c000"/><rect x="685" y="558" width="1" height="1" fill="#00c000"/><rect x="685" y="502" width="1" height="1" fill="#c0c000"/><rect x="685" y="540" width="1" height="1" fill="#c0c000"/><rect x="695" y="484" width="1" height="1" fill="#00c000"/><rect x="695" y="558" width="1" height="1" fill="#00c000"/><rect x="695" y="502" width="1" height="1" fill="#c0c000"/><rect x="695" y="540" width="1" height="1" fill="#c0c000"/><rect x="704" y="484" width="1" height="1" fill="#00c000"/><rect x="704" y="558" width="1" height="1" fill="#00c000"/><rect x="704" y="502" width="1" height="1" fill="#c0c000"/><rect x="704" y="540" width="1" height="1" fill="#c0c000"/><rect x="714" y="484" width="1" height="1" fill="#00c000"/><rect x="714" y="558" width="1" height="1" fill="#00c000"/><rect x="714" y="502" width="1" height="1" fill="#c0c000"/><rect x="714" y="540" width="1" height="1" fill="#c0c000"/><rect x="724" y="484" width="1" height="1" fill="#00c000"/><rect x="724" y="558" width="1" height="1" fill="#00c000"/><rect x="724" y="502" width="1" height="1" fill="#c0c000"/><rect x="724" y="540" width="1" height="1" fill="#c0c000"/><rect x="734" y="484" width="1" height="1" fill="#00c000"/><rect x="734" y="558" width="1" height="1" fill="#00c000"/><rect x="734" y="502" width="1" height="1" fill="#c0c000"/><rect x="734" y="540" width="1" height="1" fill="#c0c000"/><rect x="744" y="484" width="1" height="1" fill="#00c000"/><rect x="744" y="558" width="1" height="1" fill="#00c000"/><rect x="744" y="502" width="1" height="1" fill="#c0c000"/><rect x="744" y="540" width="1" height="1" fill="#c0c000"/><rect x="754" y="484" width="1" height="1" fill="#00c000"/><rect x="754" y="558" width="1" height="1" fill="#00c000"/><rect x="754" y="502" width="1" height="1" fill="#c0c000"/><rect x="754" y="540" width="1" height="1" fill="#c0c000"/><rect x="764" y="484" width="1" height="1" fill="#00c000"/><rect x="764" y="558" width="1" height="1" fill="#00c000"/><rect x="764" y="502" width="1" height="1" fill="#c0c000"/><rect x="764" y="540" width="1" height="1" fill="#c0c000"/><rect x="773" y="484" width="1" height="1" fill="#00c000"/><rect x="773" y="558" width="1" height="1" fill="#00c000"/><rect x="773" y="502" width="1" height="1" fill="#c0c000"/><rect x="773" y="540" width="1" height="1" fill="#c0c000"/><rect x="783" y="484" width="1" height="1" fill="#00c000"/><rect x="783" y="558" width="1" height="1" fill="#00c000"/><rect x="783" y="502" width="1" height="1" fill="#c0c000"/><rect x="783" y="540" width="1" height="1" fill="#c0c000"/><rect x="793" y="489" width="1" height="1" fill="#00c000"/><rect x="793" y="553" width="1" height="1" fill="#00c000"/><rect x="793" y="505" width="1" height="1" fill="#c0c000"/><rect x="793" y="537" width="1" height="1" fill="#c0c000"/><rect x="803" y="489" width="1" height="1" fill="#00c000"/><rect x="803" y="553" width="1" height="1" fill="#00c000"/><rect x="803" y="505" width="1" height="1" fill="#c0c000"/><rect x="803" y="537" width="1" height="1" fill="#c0c000"/><rect x="813" y="492" width="1" height="1" fill="#00c000"/><rect x="813" y="550" width="1" height="1" fill="#00c000"/><rect x="813" y="506" width="1" height="1" fill="#c0c000"/><rect x="813" y="535" width="1" height="1" fill="#c0c000"/><rect x="823" y="494" width="1" height="1" fill="#00c000"/><rect x="823" y="548" width="1" height="1" fill="#00c000"/><rect x="823" y="508" width="1" height="1" fill="#c0c000"/><rect x="823" y="534" width="1" height="1" fill="#c0c000"/><rect x="833" y="494" width="1" height="1" fill="#00c000"/><rect x="833" y="548" width="1" height="1" fill="#00c000"/><rect x="833" y="508" width="1" height="1" fill="#c0c000"/><rect x="833" y="534" width="1" height="1" fill="#c0c000"/><rect x="843" y="494" width="1" height="1" fill="#00c000"/><rect x="843" y="548" width="1" height="1" fill="#00c000"/><rect x="843" y="508" width="1" height="1" fill="#c0c000"/><rect x="843" y="534" width="1" height="1" fill="#c0c000"/><rect x="852" y="494" width="1" height="1" fill="#00c000"/><rect x="852" y="548" width="1" height="1" fill="#00c000"/><rect x="852" y="508" width="1" height="1" fill="#c0c000"/><rect x="852" y="534" width="1" height="1" fill="#c0c000"/><rect x="862" y="494" width="1" height="1" fill="#00c000"/><rect x="862" y="548" width="1" height="1" fill="#00c000"/><rect x="862" y="508" width="1" height="1" fill="#c0c000"/><rect x="862" y="534" width="1" height="1" fill="#c0c000"/><rect x="872" y="494" width="1" height="1" fill="#00c000"/><rect x="872" y="548" width="1" height="1" fill="#00c000"/><rect x="872" y="508" width="1" height="1" fill="#c0c000"/><rect x="872" y="534" width="1" height="1" fill="#c0c000"/><rect x="882" y="494" width="1" height="1" fill="#00c000"/><rect x="882" y="548" width="1" height="1" fill="#00c000"/><rect x="882" y="508" width="1" height="1" fill="#c0c000"/><rect x="882" y="534" width="1" height="1" fill="#c0c000"/><rect x="892" y="494" width="1" height="1" fill="#00c000"/><rect x="892" y="548" width="1" height="1" fill="#00c000"/><rect x="892" y="508" width="1" height="1" fill="#c0c000"/><rect x="892" y="534" width="1" height="1" fill="#c0c000"/><rect x="902" y="494" width="1" height="1" fill="#00c000"/><rect x="902" y="548" width="1" height="1" fill="#00c000"/><rect x="902" y="508" width="1" height="1" fill="#c0c000"/><rect x="902" y="534" width="1" height="1" fill="#c0c000"/><rect x="912" y="494" width="1" height="1" fill="#00c000"/><rect x="912" y="548" width="1" height="1" fill="#00c000"/><rect x="912" y="508" width="1" height="1" fill="#c0c000"/><rect x="912" y="534" width="1" height="1" fill="#c0c000"/><rect x="921" y="494" width="1" height="1" fill="#00c000"/><rect x="921" y="548" width="1" height="1" fill="#00c000"/><rect x="921" y="508" width="1" height="1" fill="#c0c000"/><rect x="921" y="534" width="1" height="1" fill="#c0c000"/><rect x="931" y="494" width="1" height="1" fill="#00c000"/><rect x="931" y="548" width="1" height="1" fill="#00c000"/><rect x="931" y="508" width="1" height="1" fill="#c0c000"/><rect x="931" y="534" width="1" height="1" fill="#c0c000"/><rect x="941" y="494" width="1" height="1" fill="#00c000"/><rect x="941" y="548" width="1" height="1" fill="#00c000"/><rect x="941" y="508" width="1" height="1" fill="#c0c000"/><rect x="941" y="534" width="1" height="1" fill="#c0c000"/><rect x="951" y="494" width="1" height="1" fill="#00c000"/><rect x="951" y="548" width="1" height="1" fill="#00c000"/><rect x="951" y="508" width="1" height="1" fill="#c0c000"/><rect x="951" y="534" width="1" height="1" fill="#c0c000"/><rect x="961" y="494" width="1" height="1" fill="#00c000"/><rect x="961" y="548" width="1" height="1" fill="#00c000"/><rect x="961" y="508" width="1" height="1" fill="#c0c000"/><rect x="961" y="534" width="1" height="1" fill="#c0c000"/><rect x="971" y="494" width="1" height="1" fill="#00c000"/><rect x="971" y="548" width="1" height="1" fill="#00c000"/><rect x="971" y="508" width="1" height="1" fill="#c0c000"/><rect x="971" y="534" width="1" height="1" fill="#c0c000"/><rect x="981" y="494" width="1" height="1" fill="#00c000"/><rect x="981" y="548" width="1" height="1" fill="#00c000"/><rect x="981" y="508" width="1" height="1" fill="#c0c000"/><rect x="981" y="534" width="1" height="1" fill="#c0c000"/><rect x="990" y="494" width="1" height="1" fill="#00c000"/><rect x="990" y="548" width="1" height="1" fill="#00c000"/><rect x="990" y="508" width="1" height="1" fill="#c0c000"/><rect x="990" y="534" width="1" height="1" fill="#c0c000"/><rect x="1000" y="494" width="1" height="1" fill="#00c000"/><rect x="1000" y="548" width="1" height="1" fill="#00c000"/><rect x="1000" y="508" width="1" height="1" fill="#c0c000"/><rect x="1000" y="534" width="1" height="1" fill="#c0c000"/><rect x="1010" y="494" width="1" height="1" fill="#00c000"/><rect x="1010" y="548" width="1" height="1" fill="#00c000"/><rect x="1010" y="508" width="1" height="1" fill="#c0c000"/><rect x="1010" y="534" width="1" height="1" fill="#c0c000"/><rect x="1020" y="494" width="1" height="1" fill="#00c000"/><rect x="1020" y="548" width="1" height="1" fill="#00c000"/><rect x="1020" y="508" width="1" height="1" fill="#c0c000"/><rect x="1020" y="534" width="1" height="1" fill="#c0c000"/><rect x="1030" y="494" width="1" height="1" fill="#00c000"/><rect x="1030" y="548" width="1" height="1" fill="#00c000"/><rect x="1030" y="508" width="1" height="1" fill="#c0c000"/><rect x="1030" y="534" width="1" height="1" fill="#c0c000"/><rect x="1040" y="494" width="1" height="1" fill="#00c000"/><rect x="1040" y="548" width="1" height="1" fill="#00c000"/><rect x="1040" y="508" width="1" height="1" fill="#c0c000"/><rect x="1040" y="534" width="1" height="1" fill="#c0c000"/><polyline points="4.5,416.5 14.5,416.5 24.5,416.5 34.5,416.5 44.5,416.5 54.5,416.5 63.5,416.5 73.5,416.5 83.5,416.5 93.5,416.5 103.5,416.5 113.5,426.5 123.5,426.5 132.5,426.5 142.5,426.5 152.5,426.5 162.5,426.5 172.5,426.5 182.5,426.5 192.5,426.5 201.5,426.5 211.5,426.5 221.5,426.5 231.5,426.5 241.5,426.5 251.5,426.5 261.5,426.5 270.5,426.5 280.5,426.5 290.5,426.5 300.5,426.5 310.5,426.5 320.5,426.5 330.5,426.5 340.5,426.5 349.5,426.5 359.5,426.5 369.5,429.5 379.5,439.5 389.5,447.5 399.5,458.5 409.5,465.5 418.5,467.5 428.5,467.5 438.5,470.5 448.5,470.5 458.5,470.5 468.5,470.5 478.5,470.5 487.5,470.5 497.5,470.5 507.5,470.5 517.5,470.5 527.5,469.5 537.5,468.5 547.5,466.5 556.5,464.5 566.5,463.5 576.5,462.5 586.5,460.5 596.5,457.5 606.5,452.5 616.5,448.5 626.5,448.5 635.5,447.5 645.5,447.5 655.5,447.5 665.5,447.5 675.5,447.5 685.5,447.5 695.5,447.5 704.5,447.5 714.5,447.5 724.5,447.5 734.5,447.5 744.5,447.5 754.5,447.5 764.5,447.5 773.5,447.5 783.5,447.5 793.5,456.5 803.5,458.5 813.5,463.5 823.5,468.5 833.5,468.5 843.5,468.5 852.5,468.5 862.5,468.5 872.5,468.5 882.5,468.5 892.5,468.5 902.5,468.5 912.5,468.5 921.5,468.5 931.5,468.5 941.5,468.5 951.5,468.5 961.5,468.5 971.5,468.5 981.5,468.5 990.5,468.5 1000.5,468.5 1010.5,468.5 1020.5,468.5 1030.5,468.5 1040.5,468.5" fill="none" stroke="#b40000" stroke-width="1" stroke-linecap="square" /><polyline points="4.5,626.5 14.5,626.5 24.5,626.5 34.5,626.5 44.5,626.5 54.5,626.5 63.5,626.5 73.5,626.5 83.5,626.5 93.5,626.5 103.5,626.5 113.5,616.5 123.5,616.5 132.5,616.5 142.5,616.5 152.5,616.5 162.5,616.5 172.5,616.5 182.5,616.5 192.5,616.5 201.5,616.5 211.5,616.5 221.5,616.5 231.5,616.5 241.5,616.5 251.5,616.5 261.5,616.5 270.5,616.5 280.5,616.5 290.5,616.5 300.5,616.5 310.5,616.5 320.5,616.5 330.5,616.5 340.5,616.5 349.5,616.5 359.5,616.5 369.5,613.5 379.5,603.5 389.5,595.5 399.5,584.5 409.5,577.5 418.5,575.5 428.5,575.5 438.5,572.5 448.5,572.5 458.5,572.5 468.5,572.5 478.5,572.5 487.5,572.5 497.5,572.5 507.5,572.5 517.5,572.5 527.5,573.5 537.5,574.5 547.5,576.5 556.5,578.5 566.5,579.5 576.5,580.5 586.5,582.5 596.5,585.5 606.5,590.5 616.5,594.5 626.5,594.5 635.5,595.5 645.5,595.5 655.5,595.5 665.5,595.5 675.5,595.5 685.5,595.5 695.5,595.5 704.5,595.5 714.5,595.5 724.5,595.5 734.5,595.5 744.5,595.5 754.5,595.5 764.5,595.5 773.5,595.5 783.5,595.5 793.5,586.5 803.5,584.5 813.5,579.5 823.5,574.5 833.5,574.5 843.5,574.5 852.5,574.5 862.5,574.5 872.5,574.5 882.5,574.5 892.5,574.5 902.5,574.5 912.5,574.5 921.5,574.5 931.5,574.5 941.5,574.5 951.5,574.5 961.5,574.5 971.5,574.5 981.5,574.5 990.5,574.5 1000.5,574.5 1010.5,574.5 1020.5,574.5 1030.5,574.5 1040.5,574.5" fill="none" stroke="#b40000" stroke-width="1" stroke-linecap="square" /><polyline points="4.5,442.5 14.5,442.5 24.5,442.5 34.5,442.5 44.5,442.5 54.5,442.5 63.5,442.5 73.5,442.5 83.5,442.5 93.5,442.5 103.5,442.5 113.5,450.5 123.5,450.5 132.5,450.5 142.5,450.5 152.5,450.5 162.5,450.5 172.5,450.5 182.5,450.5 192.5,450.5 201.5,450.5 211.5,450.5 221.5,450.5 231.5,450.5 241.5,450.5 251.5,450.5 261.5,450.5 270.5,450.5 280.5,450.5 290.5,450.5 300.5,450.5 310.5,450.5 320.5,450.5 330.5,450.5 340.5,450.5 349.5,450.5 359.5,450.5 369.5,452.5 379.5,459.5 389.5,466.5 399.5,474.5 409.5,479.5 418.5,480.5 428.5,481.5 438.5,483.5 448.5,483.5 458.5,483.5 468.5,483.5 478.5,483.5 487.5,483.5 497.5,483.5 507.5,483.5 517.5,483.5 527.5,482.5 537.5,482.5 547.5,480.5 556.5,478.5 566.5,477.5 576.5,477.5 586.5,476.5 596.5,473.5 606.5,469.5 616.5,466.5 626.5,466.5 635.5,465.5 645.5,465.5 655.5,465.5 665.5,465.5 675.5,465.5 685.5,465.5 695.5,465.5 704.5,465.5 714.5,465.5 724.5,465.5 734.5,465.5 744.5,465.5 754.5,465.5 764.5,465.5 773.5,465.5 783.5,465.5 793.5,472.5 803.5,474.5 813.5,477.5 823.5,481.5 833.5,481.5 843.5,481.5 852.5,481.5 862.5,481.5 872.5,481.5 882.5,481.5 892.5,481.5 902.5,481.5 912.5,481.5 921.5,481.5 931.5,481.5 941.5,481.5 951.5,481.5 961.5,481.5 971.5,481.5 981.5,481.5 990.5,481.5 1000.5,481.5 1010.5,481.5 1020.5,481.5 1030.5,481.5 1040.5,481.5" fill="none" stroke="#00b0b0" stroke-width="1" stroke-linecap="square" /><polyline points="4.5,600.5 14.5,600.5 24.5,600.5 34.5,600.5 44.5,600.5 54.5,600.5 63.5,600.5 73.5,600.5 83.5,600.5 93.5,600.5 103.5,600.5 113.5,592.5 123.5,592.5 132.5,592.5 142.5,592.5 152.5,592.5 162.5,592.5 172.5,592.5 182.5,592.5 192.5,592.5 201.5,592.5 211.5,592.5 221.5,592.5 231.5,592.5 241.5,592.5 251.5,592.5 261.5,592.5 270.5,592.5 280.5,592.5 290.5,592.5 300.5,592.5 310.5,592.5 320.5,592.5 330.5,592.5 340.5,592.5 349.5,592.5 359.5,592.5 369.5,590.5 379.5,583.5 389.5,576.5 399.5,568.5 409.5,563.5 418.5,562.5 428.5,561.5 438.5,559.5 448.5,559.5 458.5,559.5 468.5,559.5 478.5,559.5 487.5,559.5 497.5,559.5 507.5,559.5 517.5,559.5 527.5,560.5 537.5,560.5 547.5,562.5 556.5,564.5 566.5,565.5 576.5,565.5 586.5,566.5 596.5,569.5 606.5,573.5 616.5,576.5 626.5,576.5 635.5,577.5 645.5,577.5 655.5,577.5 665.5,577.5 675.5,577.5 685.5,577.5 695.5,577.5 704.5,577.5 714.5,577.5 724.5,577.5 734.5,577.5 744.5,577.5 754.5,577.5 764.5,577.5 773.5,577.5 783.5,577.5 793.5,570.5 803.5,568.5 813.5,564.5 823.5,561.5 833.5,561.5 843.5,561.5 852.5,561.5 862.5,561.5 872.5,561.5 882.5,561.5 892.5,561.5 902.5,561.5 912.5,561.5 921.5,561.5 931.5,561.5 941.5,561.5 951.5,561.5 961.5,561.5 971.5,561.5 981.5,561.5 990.5,561.5 1000.5,561.5 1010.5,561.5 1020.5,561.5 1030.5,561.5 1040.5,561.5" fill="none" stroke="#00b0b0" stroke-width="1" stroke-linecap="square" /><polyline points="4.5,524.0 14.5,518.0 24.5,521.4 34.5,526.4 44.5,528.0 54.5,527.4 63.5,527.4 73.5,530.4 83.5,532.4 93.5,536.0 103.5,532.4 113.5,529.0 123.5,528.0 132.5,533.0 142.5,539.0 152.5,542.0 162.5,542.0 172.5,540.0 182.5,539.0 192.5,536.0 201.5,536.0 211.5,540.0 221.5,533.0 231.5,527.0 241.5,523.0 251.5,524.0 261.5,515.0 270.5,504.4 280.5,503.4 290.5,500.0 300.5,501.0 310.5,491.0 320.5,484.4 330.5,487.0 340.5,502.0 349.5,512.0 359.5,524.0 369.5,513.4 379.5,514.0 389.5,524.0 399.5,536.0 409.5,538.0 418.5,518.0 428.5,518.0 438.5,523.0 448.5,517.4 458.5,518.0 468.5,524.4 478.5,523.4 487.5,511.4 497.5,523.0 507.5,533.0 517.5,536.0 527.5,546.0 537.5,546.4 547.5,550.4 556.5,556.4 566.5,558.4 576.5,560.4 586.5,562.0 596.5,568.4 606.5,579.0 616.5,587.4 626.5,588.4 635.5,591.0 645.5,571.0 655.5,553.0 665.5,546.0 675.5,538.0 685.5,529.4 695.5,529.4 704.5,530.4 714.5,524.0 724.5,524.4 734.5,530.0 744.5,529.0 754.5,527.0 764.5,527.4 773.5,531.0 783.5,534.4 793.5,539.6 803.5,539.6 813.5,538.6 823.5,542.4 833.5,543.0 843.5,542.6 852.5,541.0 862.5,535.4 872.5,537.4 882.5,538.0 892.5,545.4 902.5,539.0 912.5,532.0 921.5,518.0 931.5,520.0 941.5,522.4 951.5,523.0 961.5,525.4 971.5,530.0 981.5,528.4 990.5,527.4 1000.5,526.6 1010.5,522.0 1020.5,515.4 1030.5,520.0 1040.5,521.4" fill="none" stroke="#ffff00" stroke-width="2" stroke-linecap="square" stroke-linejoin="round" shape-rendering="crispEdges"/><rect x="4" y="107" width="1" height="19" fill="#54ffff"/><rect x="1" y="126" width="7" height="11" fill="#54ffff"/><rect x="4" y="137" width="1" height="16" fill="#54ffff"/><rect x="14" y="82" width="1" height="18" fill="#ff3232"/><rect x="11" y="100" width="7" height="1" fill="#ff3232"/><rect x="11" y="140" width="7" height="1" fill="#ff3232"/><rect x="11" y="100" width="1" height="41" fill="#ff3232"/><rect x="17" y="100" width="1" height="41" fill="#ff3232"/><rect x="21" y="87" width="7" height="41" fill="#54ffff"/><rect x="24" y="128" width="1" height="14" fill="#54ffff"/><rect x="34" y="128" width="1" height="6" fill="#54ffff"/><rect x="31" y="134" width="7" height="7" fill="#54ffff"/><rect x="34" y="141" width="1" height="21" fill="#54ffff"/><rect x="44" y="114" width="1" height="23" fill="#ff3232"/><rect x="41" y="137" width="7" height="1" fill="#ff3232"/><rect x="41" y="144" width="7" height="1" fill="#ff3232"/><rect x="41" y="137" width="1" height="8" fill="#ff3232"/><rect x="47" y="137" width="1" height="8" fill="#ff3232"/><rect x="44" y="145" width="1" height="1" fill="#ff3232"/><rect x="51" y="132" width="7" height="1" fill="#ff3232"/><rect x="51" y="138" width="7" height="1" fill="#ff3232"/><rect x="51" y="132" width="1" height="7" fill="#ff3232"/><rect x="57" y="132" width="1" height="7" fill="#ff3232"/><rect x="54" y="139" width="1" height="5" fill="#ff3232"/><rect x="63" y="125" width="1" height="7" fill="#54ffff"/><rect x="60" y="132" width="7" height="3" fill="#54ffff"/><rect x="63" y="135" width="1" height="15" fill="#54ffff"/><rect x="73" y="136" width="1" height="8" fill="#ff3232"/><rect x="70" y="144" width="7" height="1" fill="#ff3232"/><rect x="70" y="147" width="7" height="1" fill="#ff3232"/><rect x="70" y="144" width="1" height="4" fill="#ff3232"/><rect x="76" y="144" width="1" height="4" fill="#ff3232"/><rect x="73" y="148" width="1" height="4" fill="#ff3232"/><rect x="83" y="138" width="1" height="5" fill="#54ffff"/><rect x="80" y="143" width="7" height="9" fill="#54ffff"/><rect x="83" y="152" width="1" height="6" fill="#54ffff"/><rect x="93" y="147" width="1" height="12" fill="#54ffff"/><rect x="90" y="159" width="7" height="5" fill="#54ffff"/><rect x="93" y="164" width="1" height="5" fill="#54ffff"/><rect x="103" y="137" width="1" height="2" fill="#ff3232"/><rect x="100" y="139" width="7" height="1" fill="#ff3232"/><rect x="100" y="163" width="7" height="1" fill="#ff3232"/><rect x="100" y="139" width="1" height="25" fill="#ff3232"/><rect x="106" y="139" width="1" height="25" fill="#ff3232"/><rect x="103" y="164" width="1" height="3" fill="#ff3232"/><rect x="113" y="136" width="1" height="12" fill="#ff3232"/><rect x="110" y="142" width="7" height="2" fill="#ff3232"/><rect x="123" y="136" width="1" height="34" fill="#54ffff"/><rect x="120" y="145" width="7" height="1" fill="#54ffff"/><rect x="132" y="147" width="1" height="8" fill="#54ffff"/><rect x="129" y="155" width="7" height="11" fill="#54ffff"/><rect x="132" y="166" width="1" height="24" fill="#54ffff"/><rect x="142" y="169" width="1" height="4" fill="#54ffff"/><rect x="139" y="173" width="7" height="13" fill="#54ffff"/><rect x="142" y="186" width="1" height="14" fill="#54ffff"/><rect x="152" y="156" width="1" height="27" fill="#ff3232"/><rect x="149" y="183" width="7" height="1" fill="#ff3232"/><rect x="149" y="194" width="7" height="1" fill="#ff3232"/><rect x="149" y="183" width="1" height="12" fill="#ff3232"/><rect x="155" y="183" width="1" height="12" fill="#ff3232"/><rect x="162" y="173" width="1" height="11" fill="#ff3232"/><rect x="159" y="184" width="7" height="1" fill="#ff3232"/><rect x="159" y="198" width="7" height="1" fill="#ff3232"/><rect x="159" y="184" width="1" height="15" fill="#ff3232"/><rect x="165" y="184" width="1" height="15" fill="#ff3232"/><rect x="162" y="199" width="1" height="1" fill="#ff3232"/><rect x="169" y="178" width="7" height="1" fill="#ff3232"/><rect x="169" y="190" width="7" height="1" fill="#ff3232"/><rect x="169" y="178" width="1" height="13" fill="#ff3232"/><rect x="175" y="178" width="1" height="13" fill="#ff3232"/><rect x="172" y="191" width="1" height="14" fill="#ff3232"/><rect x="182" y="170" width="1" height="10" fill="#54ffff"/><rect x="179" y="180" width="7" height="3" fill="#54ffff"/><rect x="182" y="183" width="1" height="7" fill="#54ffff"/><rect x="189" y="177" width="7" height="1" fill="#ff3232"/><rect x="189" y="186" width="7" height="1" fill="#ff3232"/><rect x="189" y="177" width="1" height="10" fill="#ff3232"/><rect x="195" y="177" width="1" height="10" fill="#ff3232"/><rect x="192" y="187" width="1" height="6" fill="#ff3232"/><rect x="201" y="167" width="1" height="9" fill="#54ffff"/><rect x="198" y="176" width="7" height="7" fill="#54ffff"/><rect x="201" y="183" width="1" height="4" fill="#54ffff"/><rect x="211" y="183" width="1" height="1" fill="#54ffff"/><rect x="208" y="184" width="7" height="23" fill="#54ffff"/><rect x="211" y="207" width="1" height="2" fill="#54ffff"/><rect x="221" y="168" width="1" height="4" fill="#ff3232"/><rect x="218" y="172" width="7" height="1" fill="#ff3232"/><rect x="218" y="201" width="7" height="1" fill="#ff3232"/><rect x="218" y="172" width="1" height="30" fill="#ff3232"/><rect x="224" y="172" width="1" height="30" fill="#ff3232"/><rect x="221" y="202" width="1" height="10" fill="#ff3232"/><rect x="231" y="157" width="1" height="7" fill="#ff3232"/><rect x="228" y="164" width="7" height="1" fill="#ff3232"/><rect x="228" y="174" width="7" height="1" fill="#ff3232"/><rect x="228" y="164" width="1" height="11" fill="#ff3232"/><rect x="234" y="164" width="1" height="11" fill="#ff3232"/><rect x="231" y="175" width="1" height="6" fill="#ff3232"/><rect x="241" y="157" width="1" height="5" fill="#ff3232"/><rect x="238" y="162" width="7" height="1" fill="#ff3232"/><rect x="238" y="164" width="7" height="1" fill="#ff3232"/><rect x="238" y="162" width="1" height="3" fill="#ff3232"/><rect x="244" y="162" width="1" height="3" fill="#ff3232"/><rect x="241" y="165" width="1" height="15" fill="#ff3232"/><rect x="251" y="136" width="1" height="26" fill="#54ffff"/><rect x="248" y="162" width="7" height="19" fill="#54ffff"/><rect x="261" y="126" width="1" height="13" fill="#ff3232"/><rect x="258" y="139" width="7" height="1" fill="#ff3232"/><rect x="258" y="192" width="7" height="1" fill="#ff3232"/><rect x="258" y="139" width="1" height="54" fill="#ff3232"/><rect x="264" y="139" width="1" height="54" fill="#ff3232"/><rect x="261" y="193" width="1" height="8" fill="#ff3232"/><rect x="270" y="109" width="1" height="6" fill="#ff3232"/><rect x="267" y="115" width="7" height="1" fill="#ff3232"/><rect x="267" y="149" width="7" height="1" fill="#ff3232"/><rect x="267" y="115" width="1" height="35" fill="#ff3232"/><rect x="273" y="115" width="1" height="35" fill="#ff3232"/><rect x="270" y="150" width="1" height="6" fill="#ff3232"/><rect x="280" y="114" width="1" height="10" fill="#54ffff"/><rect x="277" y="124" width="7" height="13" fill="#54ffff"/><rect x="280" y="137" width="1" height="4" fill="#54ffff"/><rect x="290" y="64" width="1" height="51" fill="#ff3232"/><rect x="287" y="115" width="7" height="1" fill="#ff3232"/><rect x="287" y="126" width="7" height="1" fill="#ff3232"/><rect x="287" y="115" width="1" height="12" fill="#ff3232"/><rect x="293" y="115" width="1" height="12" fill="#ff3232"/><rect x="290" y="127" width="1" height="14" fill="#ff3232"/><rect x="300" y="86" width="1" height="38" fill="#54ffff"/><rect x="297" y="124" width="7" height="5" fill="#54ffff"/><rect x="300" y="129" width="1" height="5" fill="#54ffff"/><rect x="310" y="64" width="1" height="17" fill="#ff3232"/><rect x="307" y="81" width="7" height="1" fill="#ff3232"/><rect x="307" y="129" width="7" height="1" fill="#ff3232"/><rect x="307" y="81" width="1" height="49" fill="#ff3232"/><rect x="313" y="81" width="1" height="49" fill="#ff3232"/><rect x="320" y="43" width="1" height="53" fill="#54ffff"/><rect x="317" y="72" width="7" height="1" fill="#54ffff"/><rect x="330" y="62" width="1" height="14" fill="#54ffff"/><rect x="327" y="76" width="7" height="15" fill="#54ffff"/><rect x="330" y="91" width="1" height="4" fill="#54ffff"/><rect x="340" y="82" width="1" height="14" fill="#54ffff"/><rect x="337" y="96" width="7" height="47" fill="#54ffff"/><rect x="340" y="143" width="1" height="4" fill="#54ffff"/><rect x="346" y="139" width="7" height="1" fill="#ff3232"/><rect x="346" y="149" width="7" height="1" fill="#ff3232"/><rect x="346" y="139" width="1" height="11" fill="#ff3232"/><rect x="352" y="139" width="1" height="11" fill="#ff3232"/><rect x="349" y="150" width="1" height="43" fill="#ff3232"/><rect x="359" y="139" width="1" height="1" fill="#54ffff"/><rect x="356" y="140" width="7" height="25" fill="#54ffff"/><rect x="359" y="165" width="1" height="7" fill="#54ffff"/><rect x="369" y="51" width="1" height="41" fill="#ff3232"/><rect x="366" y="92" width="7" height="1" fill="#ff3232"/><rect x="366" y="152" width="7" height="1" fill="#ff3232"/><rect x="366" y="92" width="1" height="61" fill="#ff3232"/><rect x="372" y="92" width="1" height="61" fill="#ff3232"/><rect x="369" y="153" width="1" height="1" fill="#ff3232"/><rect x="379" y="78" width="1" height="22" fill="#54ffff"/><rect x="376" y="100" width="7" height="22" fill="#54ffff"/><rect x="379" y="122" width="1" height="44" fill="#54ffff"/><rect x="389" y="115" width="1" height="7" fill="#54ffff"/><rect x="386" y="122" width="7" height="39" fill="#54ffff"/><rect x="389" y="161" width="1" height="3" fill="#54ffff"/><rect x="399" y="135" width="1" height="25" fill="#54ffff"/><rect x="396" y="160" width="7" height="21" fill="#54ffff"/><rect x="399" y="181" width="1" height="28" fill="#54ffff"/><rect x="406" y="165" width="7" height="1" fill="#ff3232"/><rect x="406" y="188" width="7" height="1" fill="#ff3232"/><rect x="406" y="165" width="1" height="24" fill="#ff3232"/><rect x="412" y="165" width="1" height="24" fill="#ff3232"/><rect x="409" y="189" width="1" height="28" fill="#ff3232"/><rect x="418" y="74" width="1" height="11" fill="#ff3232"/><rect x="415" y="85" width="7" height="1" fill="#ff3232"/><rect x="415" y="153" width="7" height="1" fill="#ff3232"/><rect x="415" y="85" width="1" height="69" fill="#ff3232"/><rect x="421" y="85" width="1" height="69" fill="#ff3232"/><rect x="418" y="154" width="1" height="12" fill="#ff3232"/><rect x="428" y="79" width="1" height="6" fill="#54ffff"/><rect x="425" y="85" width="7" height="42" fill="#54ffff"/><rect x="428" y="127" width="1" height="7" fill="#54ffff"/><rect x="438" y="120" width="1" height="17" fill="#54ffff"/><rect x="435" y="137" width="7" height="13" fill="#54ffff"/><rect x="448" y="107" width="1" height="9" fill="#ff3232"/><rect x="445" y="116" width="7" height="1" fill="#ff3232"/><rect x="445" y="138" width="7" height="1" fill="#ff3232"/><rect x="445" y="116" width="1" height="23" fill="#ff3232"/><rect x="451" y="116" width="1" height="23" fill="#ff3232"/><rect x="448" y="139" width="1" height="21" fill="#ff3232"/><rect x="458" y="104" width="1" height="16" fill="#54ffff"/><rect x="455" y="120" width="7" height="11" fill="#54ffff"/><rect x="458" y="131" width="1" height="7" fill="#54ffff"/><rect x="468" y="131" width="1" height="10" fill="#54ffff"/><rect x="465" y="141" width="7" height="14" fill="#54ffff"/><rect x="468" y="155" width="1" height="1" fill="#54ffff"/><rect x="478" y="132" width="1" height="4" fill="#ff3232"/><rect x="475" y="136" width="7" height="1" fill="#ff3232"/><rect x="475" y="149" width="7" height="1" fill="#ff3232"/><rect x="475" y="136" width="1" height="14" fill="#ff3232"/><rect x="481" y="136" width="1" height="14" fill="#ff3232"/><rect x="478" y="150" width="1" height="14" fill="#ff3232"/><rect x="487" y="74" width="1" height="16" fill="#ff3232"/><rect x="484" y="90" width="7" height="1" fill="#ff3232"/><rect x="484" y="136" width="7" height="1" fill="#ff3232"/><rect x="484" y="90" width="1" height="47" fill="#ff3232"/><rect x="490" y="90" width="1" height="47" fill="#ff3232"/><rect x="487" y="137" width="1" height="8" fill="#ff3232"/><rect x="497" y="98" width="1" height="2" fill="#54ffff"/><rect x="494" y="100" width="7" height="61" fill="#54ffff"/><rect x="497" y="161" width="1" height="13" fill="#54ffff"/><rect x="507" y="156" width="1" height="16" fill="#54ffff"/><rect x="504" y="172" width="7" height="3" fill="#54ffff"/><rect x="507" y="175" width="1" height="10" fill="#54ffff"/><rect x="514" y="169" width="7" height="1" fill="#ff3232"/><rect x="514" y="180" width="7" height="1" fill="#ff3232"/><rect x="514" y="169" width="1" height="12" fill="#ff3232"/><rect x="520" y="169" width="1" height="12" fill="#ff3232"/><rect x="517" y="181" width="1" height="8" fill="#ff3232"/><rect x="527" y="179" width="1" height="2" fill="#54ffff"/><rect x="524" y="181" width="7" height="23" fill="#54ffff"/><rect x="527" y="204" width="1" height="24" fill="#54ffff"/><rect x="537" y="183" width="1" height="1" fill="#ff3232"/><rect x="534" y="184" width="7" height="1" fill="#ff3232"/><rect x="534" y="216" width="7" height="1" fill="#ff3232"/><rect x="534" y="184" width="1" height="33" fill="#ff3232"/><rect x="540" y="184" width="1" height="33" fill="#ff3232"/><rect x="537" y="217" width="1" height="6" fill="#ff3232"/><rect x="547" y="175" width="1" height="20" fill="#54ffff"/><rect x="544" y="195" width="7" height="11" fill="#54ffff"/><rect x="547" y="206" width="1" height="1" fill="#54ffff"/><rect x="556" y="200" width="1" height="12" fill="#54ffff"/><rect x="553" y="212" width="7" height="14" fill="#54ffff"/><rect x="566" y="212" width="1" height="6" fill="#54ffff"/><rect x="563" y="218" width="7" height="10" fill="#54ffff"/><rect x="566" y="228" width="1" height="28" fill="#54ffff"/><rect x="576" y="212" width="1" height="16" fill="#54ffff"/><rect x="573" y="228" width="7" height="7" fill="#54ffff"/><rect x="576" y="235" width="1" height="1" fill="#54ffff"/><rect x="586" y="233" width="1" height="6" fill="#54ffff"/><rect x="583" y="239" width="7" height="11" fill="#54ffff"/><rect x="586" y="250" width="1" height="6" fill="#54ffff"/><rect x="596" y="253" width="1" height="3" fill="#54ffff"/><rect x="593" y="256" width="7" height="23" fill="#54ffff"/><rect x="596" y="279" width="1" height="1" fill="#54ffff"/><rect x="603" y="314" width="7" height="1" fill="#ff3232"/><rect x="603" y="352" width="7" height="1" fill="#ff3232"/><rect x="603" y="314" width="1" height="39" fill="#ff3232"/><rect x="609" y="314" width="1" height="39" fill="#ff3232"/><rect x="606" y="353" width="1" height="15" fill="#ff3232"/><rect x="616" y="298" width="1" height="14" fill="#54ffff"/><rect x="613" y="312" width="7" height="22" fill="#54ffff"/><rect x="616" y="334" width="1" height="6" fill="#54ffff"/><rect x="626" y="323" width="1" height="4" fill="#ff3232"/><rect x="623" y="327" width="7" height="1" fill="#ff3232"/><rect x="623" y="335" width="7" height="1" fill="#ff3232"/><rect x="623" y="327" width="1" height="9" fill="#ff3232"/><rect x="629" y="327" width="1" height="9" fill="#ff3232"/><rect x="626" y="336" width="1" height="6" fill="#ff3232"/><rect x="635" y="330" width="1" height="3" fill="#54ffff"/><rect x="632" y="333" width="7" height="18" fill="#54ffff"/><rect x="635" y="351" width="1" height="5" fill="#54ffff"/><rect x="645" y="223" width="1" height="56" fill="#ff3232"/><rect x="642" y="279" width="7" height="1" fill="#ff3232"/><rect x="642" y="350" width="7" height="1" fill="#ff3232"/><rect x="642" y="279" width="1" height="72" fill="#ff3232"/><rect x="648" y="279" width="1" height="72" fill="#ff3232"/><rect x="645" y="351" width="1" height="5" fill="#ff3232"/><rect x="655" y="259" width="1" height="6" fill="#ff3232"/><rect x="652" y="265" width="7" height="1" fill="#ff3232"/><rect x="652" y="277" width="7" height="1" fill="#ff3232"/><rect x="652" y="265" width="1" height="13" fill="#ff3232"/><rect x="658" y="265" width="1" height="13" fill="#ff3232"/><rect x="655" y="278" width="1" height="25" fill="#ff3232"/><rect x="665" y="266" width="1" height="2" fill="#54ffff"/><rect x="662" y="268" width="7" height="12" fill="#54ffff"/><rect x="665" y="280" width="1" height="9" fill="#54ffff"/><rect x="675" y="240" width="1" height="35" fill="#ff3232"/><rect x="672" y="275" width="7" height="1" fill="#ff3232"/><rect x="672" y="289" width="7" height="1" fill="#ff3232"/><rect x="672" y="275" width="1" height="15" fill="#ff3232"/><rect x="678" y="275" width="1" height="15" fill="#ff3232"/><rect x="685" y="230" width="1" height="23" fill="#54ffff"/><rect x="682" y="253" width="7" height="6" fill="#54ffff"/><rect x="685" y="259" width="1" height="18" fill="#54ffff"/><rect x="695" y="257" width="1" height="7" fill="#54ffff"/><rect x="692" y="264" width="7" height="14" fill="#54ffff"/><rect x="695" y="278" width="1" height="6" fill="#54ffff"/><rect x="704" y="280" width="1" height="4" fill="#54ffff"/><rect x="701" y="284" width="7" height="3" fill="#54ffff"/><rect x="704" y="287" width="1" height="7" fill="#54ffff"/><rect x="714" y="247" width="1" height="10" fill="#ff3232"/><rect x="711" y="257" width="7" height="1" fill="#ff3232"/><rect x="711" y="303" width="7" height="1" fill="#ff3232"/><rect x="711" y="257" width="1" height="47" fill="#ff3232"/><rect x="717" y="257" width="1" height="47" fill="#ff3232"/><rect x="714" y="304" width="1" height="12" fill="#ff3232"/><rect x="724" y="268" width="1" height="1" fill="#54ffff"/><rect x="721" y="269" width="7" height="11" fill="#54ffff"/><rect x="724" y="280" width="1" height="7" fill="#54ffff"/><rect x="734" y="276" width="1" height="5" fill="#54ffff"/><rect x="731" y="281" width="7" height="18" fill="#54ffff"/><rect x="734" y="299" width="1" height="3" fill="#54ffff"/><rect x="744" y="269" width="1" height="11" fill="#ff3232"/><rect x="741" y="280" width="7" height="1" fill="#ff3232"/><rect x="741" y="289" width="7" height="1" fill="#ff3232"/><rect x="741" y="280" width="1" height="10" fill="#ff3232"/><rect x="747" y="280" width="1" height="10" fill="#ff3232"/><rect x="744" y="290" width="1" height="5" fill="#ff3232"/><rect x="754" y="269" width="1" height="8" fill="#ff3232"/><rect x="751" y="277" width="7" height="1" fill="#ff3232"/><rect x="751" y="284" width="7" height="1" fill="#ff3232"/><rect x="751" y="277" width="1" height="8" fill="#ff3232"/><rect x="757" y="277" width="1" height="8" fill="#ff3232"/><rect x="754" y="285" width="1" height="9" fill="#ff3232"/><rect x="764" y="276" width="1" height="6" fill="#54ffff"/><rect x="761" y="282" width="7" height="5" fill="#54ffff"/><rect x="764" y="287" width="1" height="9" fill="#54ffff"/><rect x="773" y="290" width="1" height="6" fill="#ff3232"/><rect x="770" y="296" width="7" height="1" fill="#ff3232"/><rect x="770" y="303" width="7" height="1" fill="#ff3232"/><rect x="770" y="296" width="1" height="8" fill="#ff3232"/><rect x="776" y="296" width="1" height="8" fill="#ff3232"/><rect x="773" y="304" width="1" height="7" fill="#ff3232"/><rect x="783" y="291" width="1" height="4" fill="#54ffff"/><rect x="780" y="295" width="7" height="15" fill="#54ffff"/><rect x="783" y="310" width="1" height="1" fill="#54ffff"/><rect x="793" y="305" width="1" height="14" fill="#54ffff"/><rect x="790" y="319" width="7" height="2" fill="#54ffff"/><rect x="803" y="314" width="1" height="2" fill="#ff3232"/><rect x="800" y="316" width="7" height="1" fill="#ff3232"/><rect x="800" y="320" width="7" height="1" fill="#ff3232"/><rect x="800" y="316" width="1" height="5" fill="#ff3232"/><rect x="806" y="316" width="1" height="5" fill="#ff3232"/><rect x="803" y="321" width="1" height="4" fill="#ff3232"/><rect x="813" y="285" width="1" height="22" fill="#54ffff"/><rect x="810" y="307" width="7" height="6" fill="#54ffff"/><rect x="813" y="313" width="1" height="2" fill="#54ffff"/><rect x="823" y="314" width="1" height="3" fill="#54ffff"/><rect x="820" y="317" width="7" height="17" fill="#54ffff"/><rect x="823" y="334" width="1" height="2" fill="#54ffff"/><rect x="833" y="325" width="1" height="5" fill="#54ffff"/><rect x="830" y="330" width="7" height="2" fill="#54ffff"/><rect x="833" y="332" width="1" height="8" fill="#54ffff"/><rect x="843" y="319" width="1" height="15" fill="#ff3232"/><rect x="840" y="334" width="7" height="1" fill="#ff3232"/><rect x="840" y="341" width="7" height="1" fill="#ff3232"/><rect x="840" y="334" width="1" height="8" fill="#ff3232"/><rect x="846" y="334" width="1" height="8" fill="#ff3232"/><rect x="852" y="327" width="1" height="5" fill="#ff3232"/><rect x="849" y="332" width="7" height="1" fill="#ff3232"/><rect x="849" y="341" width="7" height="1" fill="#ff3232"/><rect x="849" y="332" width="1" height="10" fill="#ff3232"/><rect x="855" y="332" width="1" height="10" fill="#ff3232"/><rect x="852" y="342" width="1" height="12" fill="#ff3232"/><rect x="862" y="298" width="1" height="18" fill="#ff3232"/><rect x="859" y="316" width="7" height="1" fill="#ff3232"/><rect x="859" y="342" width="7" height="1" fill="#ff3232"/><rect x="859" y="316" width="1" height="27" fill="#ff3232"/><rect x="865" y="316" width="1" height="27" fill="#ff3232"/><rect x="872" y="312" width="1" height="4" fill="#54ffff"/><rect x="869" y="316" width="7" height="23" fill="#54ffff"/><rect x="872" y="339" width="1" height="3" fill="#54ffff"/><rect x="882" y="336" width="1" height="8" fill="#ff3232"/><rect x="879" y="344" width="7" height="2" fill="#ff3232"/><rect x="892" y="334" width="1" height="17" fill="#54ffff"/><rect x="889" y="351" width="7" height="18" fill="#54ffff"/><rect x="892" y="369" width="1" height="7" fill="#54ffff"/><rect x="902" y="332" width="1" height="6" fill="#ff3232"/><rect x="899" y="338" width="7" height="1" fill="#ff3232"/><rect x="899" y="359" width="7" height="1" fill="#ff3232"/><rect x="899" y="338" width="1" height="22" fill="#ff3232"/><rect x="905" y="338" width="1" height="22" fill="#ff3232"/><rect x="902" y="360" width="1" height="17" fill="#ff3232"/><rect x="912" y="316" width="1" height="11" fill="#ff3232"/><rect x="909" y="327" width="7" height="1" fill="#ff3232"/><rect x="909" y="341" width="7" height="1" fill="#ff3232"/><rect x="909" y="327" width="1" height="15" fill="#ff3232"/><rect x="915" y="327" width="1" height="15" fill="#ff3232"/><rect x="912" y="342" width="1" height="3" fill="#ff3232"/><rect x="921" y="249" width="1" height="38" fill="#ff3232"/><rect x="918" y="287" width="7" height="1" fill="#ff3232"/><rect x="918" y="326" width="7" height="1" fill="#ff3232"/><rect x="918" y="287" width="1" height="40" fill="#ff3232"/><rect x="924" y="287" width="1" height="40" fill="#ff3232"/><rect x="921" y="327" width="1" height="13" fill="#ff3232"/><rect x="931" y="302" width="1" height="4" fill="#54ffff"/><rect x="928" y="306" width="7" height="20" fill="#54ffff"/><rect x="941" y="320" width="1" height="1" fill="#54ffff"/><rect x="938" y="321" width="7" height="9" fill="#54ffff"/><rect x="941" y="330" width="1" height="10" fill="#54ffff"/><rect x="951" y="327" width="1" height="13" fill="#ffffff"/><rect x="949" y="330" width="5" height="1" fill="#ffffff"/><rect x="961" y="330" width="1" height="1" fill="#54ffff"/><rect x="958" y="331" width="7" height="5" fill="#54ffff"/><rect x="961" y="336" width="1" height="4" fill="#54ffff"/><rect x="971" y="332" width="1" height="4" fill="#54ffff"/><rect x="968" y="336" width="7" height="15" fill="#54ffff"/><rect x="971" y="351" width="1" height="4" fill="#54ffff"/><rect x="981" y="324" width="1" height="12" fill="#ff3232"/><rect x="978" y="336" width="7" height="1" fill="#ff3232"/><rect x="978" y="358" width="7" height="1" fill="#ff3232"/><rect x="978" y="336" width="1" height="23" fill="#ff3232"/><rect x="984" y="336" width="1" height="23" fill="#ff3232"/><rect x="981" y="359" width="1" height="13" fill="#ff3232"/><rect x="990" y="333" width="1" height="4" fill="#ff3232"/><rect x="987" y="337" width="7" height="1" fill="#ff3232"/><rect x="987" y="347" width="7" height="1" fill="#ff3232"/><rect x="987" y="337" width="1" height="11" fill="#ff3232"/><rect x="993" y="337" width="1" height="11" fill="#ff3232"/><rect x="990" y="348" width="1" height="10" fill="#ff3232"/><rect x="1000" y="328" width="1" height="9" fill="#ff3232"/><rect x="997" y="337" width="7" height="1" fill="#ff3232"/><rect x="997" y="341" width="7" height="1" fill="#ff3232"/><rect x="997" y="337" width="1" height="5" fill="#ff3232"/><rect x="1003" y="337" width="1" height="5" fill="#ff3232"/><rect x="1000" y="342" width="1" height="4" fill="#ff3232"/><rect x="1010" y="280" width="1" height="38" fill="#ff3232"/><rect x="1007" y="318" width="7" height="1" fill="#ff3232"/><rect x="1007" y="347" width="7" height="1" fill="#ff3232"/><rect x="1007" y="318" width="1" height="30" fill="#ff3232"/><rect x="1013" y="318" width="1" height="30" fill="#ff3232"/><rect x="1020" y="296" width="1" height="12" fill="#ff3232"/><rect x="1017" y="308" width="7" height="1" fill="#ff3232"/><rect x="1017" y="329" width="7" height="1" fill="#ff3232"/><rect x="1017" y="308" width="1" height="22" fill="#ff3232"/><rect x="1023" y="308" width="1" height="22" fill="#ff3232"/><rect x="1020" y="330" width="1" height="3" fill="#ff3232"/><rect x="1030" y="295" width="1" height="16" fill="#54ffff"/><rect x="1027" y="311" width="7" height="29" fill="#54ffff"/><rect x="1040" y="316" width="1" height="14" fill="#ff3232"/><rect x="1037" y="330" width="7" height="1" fill="#ff3232"/><rect x="1037" y="340" width="7" height="1" fill="#ff3232"/><rect x="1037" y="330" width="1" height="11" fill="#ff3232"/><rect x="1043" y="330" width="1" height="11" fill="#ff3232"/><rect x="1040" y="341" width="1" height="3" fill="#ff3232"/><rect x="1076" y="337" width="50" height="1" fill="#b00000"/><rect x="1076" y="353" width="50" height="1" fill="#b00000"/><rect x="1076" y="338" width="50" height="15" fill="#000080"/><rect x="659" y="631" width="78" height="15" fill="#000080"/><rect x="658" y="630" width="1" height="16" fill="#b00000"/><rect x="737" y="630" width="1" height="16" fill="#b00000"/><rect x="707" y="382" width="13" height="13" fill="#10407c"/><polyline points="320.5,42 320.5,39.5 324,39.5" fill="none" stroke="#c0c0c0" stroke-width="1"/><polyline points="321.5,40.5 332.5,44.5" fill="none" stroke="#c0c0c0" stroke-width="1"/><polyline points="896.5,374.5 893.5,377.5 896.5,380.5" fill="none" stroke="#c0c0c0" stroke-width="1"/><rect x="892" y="377" width="12" height="1" fill="#c0c0c0"/><circle cx="134" cy="29" r="6.1" fill="#808080" shape-rendering="auto"/><polyline points="130.9,27.7 134,30.8 137.1,27.7" fill="none" stroke="#101010" stroke-width="1.3" shape-rendering="auto"/><circle cx="8" cy="405.3" r="6.1" fill="#808080" shape-rendering="auto"/><polyline points="4.9,404.0 8,407.1 11.1,404.0" fill="none" stroke="#101010" stroke-width="1.3" shape-rendering="auto"/><rect x="5.5" y="3.5" width="11" height="10" rx="2.5" fill="none" stroke="#7c7c7c" stroke-width="1.2" shape-rendering="auto"/><rect x="12" y="5" width="3" height="7" fill="#a0a0a0"/><polygon points="1047.5,24.5 1053,30 1047.5,35.5 1042,30" fill="none" stroke="#909090" stroke-width="1" shape-rendering="auto"/><rect x="1060.5" y="24.5" width="11" height="10" rx="2.5" fill="none" stroke="#7c7c7c" stroke-width="1.2" shape-rendering="auto"/><rect x="1067" y="26" width="3" height="7" fill="#a0a0a0"/></svg>
<div style="position:absolute;left:0;top:0;width:1130px;height:650px;will-change:transform"><span class="t " style="left:28px;top:2px;color:#d0d0d0;font-size:12px;">分时</span><span class="t " style="left:62px;top:2px;color:#d0d0d0;font-size:12px;">1分钟</span><span class="t " style="left:101px;top:2px;color:#d0d0d0;font-size:12px;">5分钟</span><span class="t " style="left:140px;top:2px;color:#d0d0d0;font-size:12px;">15分钟</span><span class="t " style="left:186px;top:2px;color:#d0d0d0;font-size:12px;">30分钟</span><span class="t " style="left:232px;top:2px;color:#d0d0d0;font-size:12px;">60分钟</span><span class="t " style="left:312px;top:2px;color:#d0d0d0;font-size:12px;">周线</span><span class="t " style="left:345px;top:2px;color:#d0d0d0;font-size:12px;">月线</span><span class="t " style="left:379px;top:2px;color:#d0d0d0;font-size:12px;">多周期</span><span class="t " style="left:423px;top:2px;color:#d0d0d0;font-size:12px;">更多</span><span class="t " style="left:278px;top:2px;color:#30f0ff;font-size:12px;">日线</span><span class="t " style="left:450px;top:1px;color:#d0d0d0;font-size:12px;transform:scale(0.85,1.6);transform-origin:50% 60%;">&gt;</span><span class="t " style="left:816px;top:2px;color:#d0d0d0;font-size:12px;">复权</span><span class="t " style="left:850px;top:2px;color:#d0d0d0;font-size:12px;">叠加</span><span class="t " style="left:885px;top:2px;color:#d0d0d0;font-size:12px;">多股</span><span class="t " style="left:920px;top:2px;color:#d0d0d0;font-size:12px;">统计</span><span class="t " style="left:955px;top:2px;color:#d0d0d0;font-size:12px;">画线</span><span class="t " style="left:992px;top:2px;color:#d0d0d0;font-size:12px;">F10</span><span class="t " style="left:1025px;top:2px;color:#d0d0d0;font-size:12px;">标记</span><span class="t " style="left:1057px;top:2px;color:#d0d0d0;font-size:12px;">+自选</span><span class="t " style="left:1096px;top:2px;color:#d0d0d0;font-size:12px;">返回</span><span class="t " style="left:3px;top:22px;color:#d0d0d0;font-size:12px;">旗天科技(日线.前复权)</span><span class="t n" style="left:1090px;top:53px;color:#ff3232;font-size:12px;">14.00</span><span class="t n" style="left:1090px;top:100px;color:#ff3232;font-size:12px;">13.50</span><span class="t n" style="left:1090px;top:147px;color:#ff3232;font-size:12px;">13.00</span><span class="t n" style="left:1090px;top:194px;color:#ff3232;font-size:12px;">12.50</span><span class="t n" style="left:1090px;top:241px;color:#ff3232;font-size:12px;">12.00</span><span class="t n" style="left:1090px;top:288px;color:#ff3232;font-size:12px;">11.50</span><span class="t n" style="left:1077px;top:338px;color:#d8d8d8;font-size:12px;">10.87</span><span class="t n" style="left:1097px;top:452px;color:#ff3232;font-size:12px;">0.50</span><span class="t n" style="left:1097px;top:484px;color:#ff3232;font-size:12px;">0.25</span><span class="t n" style="left:1097px;top:515px;color:#ff3232;font-size:12px;">0.00</span><span class="t n" style="left:335px;top:39px;color:#c8c8c8;font-size:12px;">14.20</span><span class="t n" style="left:905px;top:372px;color:#c8c8c8;font-size:12px;">10.61</span><span class="t " style="left:708px;top:382px;color:#ffffff;font-size:12px;">财</span><span class="t " style="left:18px;top:399px;color:#d8d8d8;font-size:12px;">股朋指标网</span><span class="t n" style="left:83px;top:399px;color:#ff0000;font-size:12px;">: 0.02</span><span class="t n" style="left:118.5px;top:399px;color:#00c0c8;font-size:12px;">: 0.02</span><span class="t n" style="left:153px;top:399px;color:#00c000;font-size:12px;">: 0.01</span><span class="t n" style="left:188px;top:399px;color:#c0c000;font-size:12px;">: 0.01</span><span class="t n" style="left:223px;top:399px;color:#c0c0c0;font-size:12px;">: 0.00</span><span class="t n" style="left:258px;top:399px;color:#c0c000;font-size:12px;word-spacing:-1.2px;">: -0.01</span><span class="t n" style="left:297px;top:399px;color:#00c000;font-size:12px;word-spacing:-1.2px;">: -0.01</span><span class="t n" style="left:336px;top:399px;color:#00c0c8;font-size:12px;word-spacing:-1.2px;">: -0.02</span><span class="t n" style="left:375px;top:399px;color:#ff0000;font-size:12px;word-spacing:-1.2px;">: -0.02</span><span class="t n" style="left:414px;top:399px;color:#c00000;font-size:12px;">: 0.43</span><span class="t n" style="left:449px;top:399px;color:#00c0c8;font-size:12px;">: 0.32</span><span class="t n" style="left:484px;top:399px;color:#00c000;font-size:12px;">: 0.21</span><span class="t n" style="left:519px;top:399px;color:#c0c000;font-size:12px;">: 0.11</span><span class="t n" style="left:554px;top:399px;color:#c0c0c0;font-size:12px;">: 0.00</span><span class="t n" style="left:589px;top:399px;color:#c0c000;font-size:12px;word-spacing:-1.2px;">: -0.11</span><span class="t n" style="left:628px;top:399px;color:#00c000;font-size:12px;word-spacing:-1.2px;">: -0.21</span><span class="t n" style="left:667px;top:399px;color:#00c0c8;font-size:12px;word-spacing:-1.2px;">: -0.32</span><span class="t n" style="left:706px;top:399px;color:#c00000;font-size:12px;word-spacing:-1.2px;">: -0.43</span><span class="t n" style="left:745.5px;top:399px;color:#ffff00;font-size:12px;letter-spacing:-0.2px;">OOOOO: 0.00</span><span class="t " style="left:5px;top:632px;color:#ff3232;font-size:12px;">2025年</span><span class="t n" style="left:163px;top:632px;color:#ff3232;font-size:12px;">8</span><span class="t n" style="left:370px;top:632px;color:#ff3232;font-size:12px;">9</span><span class="t n" style="left:587px;top:632px;color:#ff3232;font-size:12px;">10</span><span class="t n" style="left:755px;top:632px;color:#ff3232;font-size:12px;">11</span><span class="t n" style="left:952px;top:632px;color:#ff3232;font-size:12px;">12</span><span class="t " style="left:660px;top:632px;color:#d8d8d8;font-size:12px;">2025/10/20/一</span></div>
<div class="wm"><div class="a">指标公式网</div><div class="b">www.zbgs3.com</div></div>
</body></html>
